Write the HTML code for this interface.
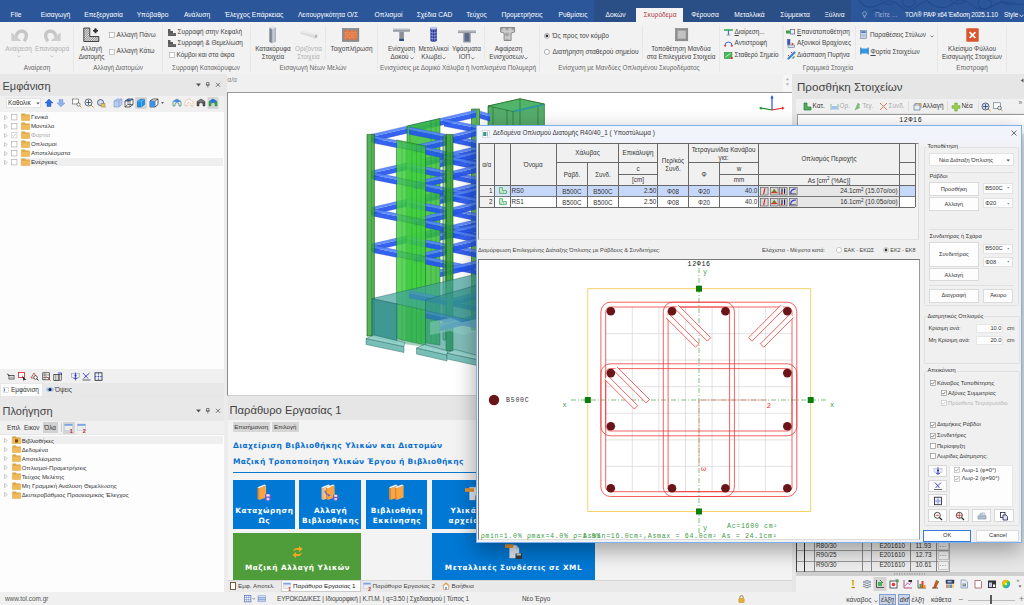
<!DOCTYPE html>
<html lang="el"><head><meta charset="utf-8"><title>RAF</title><style>
*{box-sizing:border-box;margin:0;padding:0}
html,body{width:1024px;height:605px;overflow:hidden;background:#e6e6e6;font-family:"Liberation Sans",sans-serif;}
#root{position:relative;width:1024px;height:605px;overflow:hidden;background:#e6e6e6}
.t{position:absolute;white-space:nowrap;line-height:1;}
.b{position:absolute;}
svg{position:absolute;overflow:visible}
.mono{font-family:"Liberation Mono","DejaVu Sans Mono",monospace}
</style></head><body><div id="root">
<div class="b" style="left:0px;top:0px;width:1024px;height:22px;background:#2b579a;"></div>
<div class="b" style="left:594px;top:0px;width:257px;height:22px;background:#2a4e86;"></div>
<svg style="left:851px;top:0" width="173" height="22" viewBox="0 0 173 22"><g fill="none" stroke="#244a8c" stroke-width="1.100" opacity=".9">
<path d="M8 0c3 6 10 9 17 6s10-7 18-4 8 9 16 8 8-8 16-9"/><path d="M30 0c2 4 8 6 12 3"/><path d="M52 0c-2 5 4 9 9 6s4-7 0-6"/><path d="M76 0c4 6 14 10 22 6s8-8 16-5 10 10 20 8 12-8 20-7 12 4 19 2"/><path d="M100 0c3 5 10 5 14 1"/><path d="M128 0c-3 5 2 11 8 9s6-8 1-9"/><path d="M150 0c2 4 9 6 14 3"/><path d="M20 12c3-3 8-3 11 0"/></g></svg>
<div class="b" style="left:636px;top:8px;width:47px;height:15px;background:#f3f3f3;"></div>
<div class="t" style="left:16px;top:11.5px;font-size:6.7px;color:#fff;transform:translateX(-50%);">File</div>
<div class="t" style="left:55.5px;top:11.5px;font-size:6.7px;color:#fff;transform:translateX(-50%);">Εισαγωγή</div>
<div class="t" style="left:103.5px;top:11.5px;font-size:6.7px;color:#fff;transform:translateX(-50%);">Επεξεργασία</div>
<div class="t" style="left:152.5px;top:11.5px;font-size:6.7px;color:#fff;transform:translateX(-50%);">Υπόβαθρο</div>
<div class="t" style="left:197px;top:11.5px;font-size:6.7px;color:#fff;transform:translateX(-50%);">Ανάλυση</div>
<div class="t" style="left:254px;top:11.5px;font-size:6.7px;color:#fff;transform:translateX(-50%);">Έλεγχος Επάρκειας</div>
<div class="t" style="left:328px;top:11.5px;font-size:6.7px;color:#fff;transform:translateX(-50%);">Λειτουργικότητα Ο/Σ</div>
<div class="t" style="left:388.5px;top:11.5px;font-size:6.7px;color:#fff;transform:translateX(-50%);">Οπλισμοί</div>
<div class="t" style="left:434.5px;top:11.5px;font-size:6.7px;color:#fff;transform:translateX(-50%);">Σχέδια CAD</div>
<div class="t" style="left:476.5px;top:11.5px;font-size:6.7px;color:#fff;transform:translateX(-50%);">Τεύχος</div>
<div class="t" style="left:522px;top:11.5px;font-size:6.7px;color:#fff;transform:translateX(-50%);">Προμετρήσεις</div>
<div class="t" style="left:573px;top:11.5px;font-size:6.7px;color:#fff;transform:translateX(-50%);">Ρυθμίσεις</div>
<div class="t" style="left:615.5px;top:11.5px;font-size:6.7px;color:#fff;transform:translateX(-50%);">Δοκών</div>
<div class="t" style="left:660px;top:11.5px;font-size:6.7px;color:#b33b44;transform:translateX(-50%);">Σκυρόδεμα</div>
<div class="t" style="left:705px;top:11.5px;font-size:6.7px;color:#fff;transform:translateX(-50%);">Φέρουσα</div>
<div class="t" style="left:749.5px;top:11.5px;font-size:6.7px;color:#fff;transform:translateX(-50%);">Μεταλλικά</div>
<div class="t" style="left:795px;top:11.5px;font-size:6.7px;color:#fff;transform:translateX(-50%);">Σύμμεικτα</div>
<div class="t" style="left:834.5px;top:11.5px;font-size:6.7px;color:#fff;transform:translateX(-50%);">Ξύλινα</div>
<svg style="left:862.300px;top:11.200px" width="5.200" height="7.400" viewBox="0 0 7 10"><path d="M3.5 .8a2.6 2.6 0 0 0-1.5 4.7v1.3h3V5.5A2.6 2.6 0 0 0 3.500 .8z" fill="none" stroke="#c9d4e8" stroke-width=".7"/><path d="M2.3 7.8h2.4M2.6 8.8h1.8" stroke="#c9d4e8" stroke-width=".6"/></svg>
<div class="t" style="left:875px;top:11.5px;font-size:6.7px;color:#9fb2d4;">Πείτε ...</div>
<div class="t" style="left:905px;top:11.5px;font-size:6.4px;color:#fff;letter-spacing:-.22px">ΤΟΛ® ΡΑΦ x64 Έκδοση 2025.1.10</div>
<div class="t" style="left:1004px;top:11.5px;font-size:6.4px;color:#fff;">Style</div>
<svg style="left:1019px;top:14px" width="5" height="4" viewBox="0 0 5 4"><path d="M.5 .8l2 2 2-2" fill="none" stroke="#fff" stroke-width=".8"/></svg>
<div class="b" style="left:0px;top:22px;width:1024px;height:52px;background:#f2f2f2;"></div>
<svg style="left:10.500px;top:29px" width="17" height="13" viewBox="0 0 17 13"><path d="M4.800 8.200C5.500 3.200 9 1.800 11.800 2.200s4.200 3 3.300 6.200c-.4 1.500-1 2.500-1.900 3.800" fill="none" stroke="#c6c6c6" stroke-width="3.400"/><path d="M.3 3.200V12h10.200z" fill="#cdcdcd"/></svg>
<svg style="left:43.500px;top:29px" width="17" height="13" viewBox="0 0 17 13"><g transform="translate(17 0) scale(-1 1)"><path d="M4.800 8.200C5.500 3.200 9 1.800 11.800 2.200s4.200 3 3.300 6.200c-.4 1.500-1 2.500-1.900 3.800" fill="none" stroke="#c6c6c6" stroke-width="3.400"/><path d="M.3 3.200V12h10.200z" fill="#cdcdcd"/></g></svg>
<div class="t" style="left:18.5px;top:45.5px;font-size:6.4px;color:#b0b0b0;transform:translateX(-50%);">Αναίρεση</div>
<div class="t" style="left:52px;top:45.5px;font-size:6.4px;color:#b0b0b0;transform:translateX(-50%);">Επαναφορά</div>
<svg style="left:16.5px;top:55.2px" width="4" height="3" viewBox="0 0 4 3"><path d="M.4 .5l1.6 1.6L3.600 .5" fill="none" stroke="#bbb" stroke-width=".7"/></svg>
<svg style="left:50px;top:55.2px" width="4" height="3" viewBox="0 0 4 3"><path d="M.4 .5l1.6 1.6L3.600 .5" fill="none" stroke="#bbb" stroke-width=".7"/></svg>
<div class="t" style="left:37px;top:64.5px;font-size:6.4px;color:#666;transform:translateX(-50%);">Αναίρεση</div>
<div class="b" style="left:72.7px;top:25px;width:1.4px;height:47px;background:#e7e7e7;"></div>
<svg style="left:83px;top:27px" width="17" height="16" viewBox="0 0 17 16"><defs><pattern id="hat" width="1.600" height="1.600" patternUnits="userSpaceOnUse" patternTransform="rotate(45)"><rect width="1.600" height="1.600" fill="#e8e8e8"/><rect width=".8" height="1.600" fill="#8a8a8a"/></pattern></defs><path d="M.8 1h6v8.500h9V14.500H.8z" fill="url(#hat)" stroke="#333" stroke-width=".9"/><path d="M12.500 1.200v5M10 3.700h5" stroke="#333" stroke-width="1.600"/><circle cx="12.500" cy="3.700" r="1.800" fill="#333"/></svg>
<div class="t" style="left:91.5px;top:45.5px;font-size:6.4px;color:#444;transform:translateX(-50%);">Αλλαγή</div>
<div class="t" style="left:91.5px;top:54.3px;font-size:6.4px;color:#444;transform:translateX(-50%);">Διατομής</div>
<svg style="left:108.5px;top:32px" width="5.8" height="5.8" viewBox="0 0 10 10"><rect x=".6" y=".6" width="8.800" height="8.800" fill="#fff" stroke="#a6a6a6" stroke-width="1.100"/></svg>
<div class="t" style="left:116.5px;top:31.5px;font-size:6.4px;color:#444;">Αλλαγή Πάνω</div>
<svg style="left:108.5px;top:48.5px" width="5.8" height="5.8" viewBox="0 0 10 10"><rect x=".6" y=".6" width="8.800" height="8.800" fill="#fff" stroke="#a6a6a6" stroke-width="1.100"/></svg>
<div class="t" style="left:116.5px;top:48px;font-size:6.4px;color:#444;">Αλλαγή Κάτω</div>
<div class="t" style="left:118px;top:64.5px;font-size:6.4px;color:#666;transform:translateX(-50%);">Αλλαγή Διατομών</div>
<div class="b" style="left:161.7px;top:25px;width:1.4px;height:47px;background:#e7e7e7;"></div>
<svg style="left:168px;top:28.5px" width="8" height="7" viewBox="0 0 8 7"><path d="M0 0h2.500v2h2.500v2h3v3H0z" fill="#5a5a5a"/><path d="M0 5h8" stroke="#999" stroke-width=".5"/></svg>
<div class="t" style="left:177.5px;top:28.5px;font-size:6.4px;color:#444;">Συρραφή στην Κεφαλή</div>
<svg style="left:168px;top:40px" width="8" height="7" viewBox="0 0 8 7"><path d="M0 0h2.500v2h2.500v2h3v3H0z" fill="#5a5a5a"/><path d="M0 5h8" stroke="#999" stroke-width=".5"/></svg>
<div class="t" style="left:177.5px;top:40px;font-size:6.4px;color:#444;">Συρραφή &amp; Θεμελίωση</div>
<svg style="left:168.5px;top:52px" width="5.8" height="5.8" viewBox="0 0 10 10"><rect x=".6" y=".6" width="8.800" height="8.800" fill="#fff" stroke="#a6a6a6" stroke-width="1.100"/></svg>
<div class="t" style="left:176.5px;top:51.5px;font-size:6.4px;color:#444;">Κόμβοι και στα άκρα</div>
<div class="t" style="left:206px;top:64.5px;font-size:6.4px;color:#666;transform:translateX(-50%);">Συρραφή Κατακόρυφων</div>
<div class="b" style="left:249.7px;top:25px;width:1.4px;height:47px;background:#e7e7e7;"></div>
<svg style="left:269.300px;top:26px" width="7.400" height="17.500" viewBox="0 0 7.400 17.500"><defs><linearGradient id="colg" x1="0" x2="1"><stop offset="0" stop-color="#6f7884"/><stop offset=".42" stop-color="#8d96a2"/><stop offset=".5" stop-color="#cfd4da"/><stop offset="1" stop-color="#aab0b8"/></linearGradient></defs><path d="M.4 2L3.500 .4 7 1.600V15.800L3.500 17.200 .4 16z" fill="url(#colg)"/><path d="M.4 2L3.500 .4 7 1.600 3.500 3.200z" fill="#dfe3e8"/></svg>
<div class="t" style="left:273px;top:45.5px;font-size:6.4px;color:#444;transform:translateX(-50%);">Κατακόρυφα</div>
<div class="t" style="left:273px;top:54.3px;font-size:6.4px;color:#444;transform:translateX(-50%);">Στοιχεία</div>
<svg style="left:299.800px;top:31.200px" width="17.800" height="7.800" viewBox="0 0 18 8"><path d="M.3 1.300L3 .3l14.500 3v3l-2.300 1.400L.3 2.800z" fill="#dcdcdc"/><path d="M.3 1.300L3 .3l14.500 3-2.300 1z" fill="#ebebeb"/><path d="M15.200 4.300l2.300-1v3l-2.300 1.400z" fill="#b8b8b8"/></svg>
<div class="t" style="left:308.5px;top:45.5px;font-size:6.4px;color:#b0b0b0;transform:translateX(-50%);">Οριζόντια</div>
<div class="t" style="left:308.5px;top:54.3px;font-size:6.4px;color:#b0b0b0;transform:translateX(-50%);">Στοιχεία</div>
<div class="b" style="left:324.7px;top:26px;width:1.4px;height:33px;background:#e7e7e7;"></div>
<svg style="left:342.300px;top:27.700px" width="17.300" height="14" viewBox="0 0 19 15"><rect x=".5" y=".5" width="18" height="14" fill="#8d8d8d" stroke="#6a6a6a" stroke-width=".6"/><rect x="2.500" y="2.500" width="14" height="10" fill="#e0733c"/><path d="M2.500 5h14M2.500 7.500h14M2.500 10h14M6 2.500v2.500M11 2.500v2.500M14.500 2.500v2.500M4 5v2.500M8.500 5v2.500M13 5v2.500M6 7.500V10M11 7.500V10M4 10v2.500M8.500 10v2.500M13 10v2.500" stroke="#f3b089" stroke-width=".45"/></svg>
<div class="t" style="left:351.5px;top:45.5px;font-size:6.4px;color:#444;transform:translateX(-50%);">Τοιχοπλήρωση</div>
<div class="t" style="left:313px;top:64.5px;font-size:6.4px;color:#666;transform:translateX(-50%);">Εισαγωγή Νέων Μελών</div>
<div class="b" style="left:376.7px;top:25px;width:1.4px;height:47px;background:#e7e7e7;"></div>
<svg style="left:393px;top:27.5px" width="17" height="14" viewBox="0 0 17 14"><path d="M0 .8h17v3H0z" fill="#9a9fa6"/><path d="M0 .8h17v1H0z" fill="#c3c7cc"/><rect x="6.300" y="3.800" width="4.600" height="9.200" fill="#8a8f96"/><rect x="6.300" y="10.800" width="4.600" height="2.200" fill="#2f4a8a"/></svg>
<div class="t" style="left:401.5px;top:45.5px;font-size:6.4px;color:#444;transform:translateX(-50%);">Ενίσχυση</div>
<div class="t" style="left:399.5px;top:54.3px;font-size:6.4px;color:#444;transform:translateX(-50%);">Δοκού</div>
<svg style="left:409.7px;top:56.5px" width="4" height="3" viewBox="0 0 4 3"><path d="M.4 .5l1.6 1.6L3.600 .5" fill="none" stroke="#555" stroke-width=".7"/></svg>
<svg style="left:429.500px;top:26px" width="7.200" height="16.800" viewBox="0 0 7.200 16.800"><path d="M.4 2.200C.4 .6 6.800 .6 6.800 2.200V14.600C6.800 16.300 .4 16.300 .4 14.600z" fill="#1f2f9a"/><ellipse cx="3.600" cy="2.200" rx="3.200" ry="1.400" fill="#b9c8f0"/><path d="M2.200 3.400V15.700M4.800 3.500V15.700M.4 6c1.500 1.200 4.900 1.200 6.400 0M.4 9c1.500 1.200 4.900 1.200 6.400 0M.4 12c1.500 1.200 4.900 1.200 6.400 0" stroke="#dfe6ff" stroke-width=".45" fill="none"/></svg>
<div class="t" style="left:433.5px;top:45.5px;font-size:6.4px;color:#444;transform:translateX(-50%);">Μεταλλικοί</div>
<div class="t" style="left:431.5px;top:54.3px;font-size:6.4px;color:#444;transform:translateX(-50%);">Κλωβεί</div>
<svg style="left:442.3px;top:56.5px" width="4" height="3" viewBox="0 0 4 3"><path d="M.4 .5l1.6 1.6L3.600 .5" fill="none" stroke="#555" stroke-width=".7"/></svg>
<svg style="left:457.6px;top:30px" width="18" height="13" viewBox="0 0 18 13"><path d="M0 .5h18v2.600H0z" fill="#9a9fa6"/><path d="M0 .5h18v1H0z" fill="#c3c7cc"/><rect x="5.200" y="3.100" width="7.600" height="9.400" fill="#9a9fa6"/><rect x="6.600" y="3.100" width="4.800" height="8.200" fill="#5a6a8a"/></svg>
<div class="t" style="left:466.5px;top:45.5px;font-size:6.4px;color:#444;transform:translateX(-50%);">Υφάσματα</div>
<div class="t" style="left:464.5px;top:54.3px;font-size:6.4px;color:#444;transform:translateX(-50%);">ΙΟΠ</div>
<svg style="left:470.7px;top:56.5px" width="4" height="3" viewBox="0 0 4 3"><path d="M.4 .5l1.6 1.6L3.600 .5" fill="none" stroke="#555" stroke-width=".7"/></svg>
<div class="b" style="left:483.7px;top:26px;width:1.4px;height:33px;background:#e7e7e7;"></div>
<svg style="left:500.300px;top:27.200px" width="15.200" height="14" viewBox="0 0 15 14"><defs><pattern id="dots" width="1.200" height="1.200" patternUnits="userSpaceOnUse"><rect width="1.200" height="1.200" fill="#cfcfcf"/><rect width=".6" height=".6" fill="#8a8a8a"/></pattern></defs><path d="M.5 .5h14v4.500l-3.500 1v7.500H4v-7.500L.5 5z" fill="url(#dots)" stroke="#777" stroke-width=".8"/></svg>
<div class="t" style="left:508.5px;top:45.5px;font-size:6.4px;color:#444;transform:translateX(-50%);">Αφαίρεση</div>
<div class="t" style="left:506.5px;top:54.3px;font-size:6.4px;color:#444;transform:translateX(-50%);">Ενισχύσεων</div>
<svg style="left:523.7px;top:56.5px" width="4" height="3" viewBox="0 0 4 3"><path d="M.4 .5l1.6 1.6L3.600 .5" fill="none" stroke="#555" stroke-width=".7"/></svg>
<div class="t" style="left:458px;top:64.5px;font-size:6.4px;color:#666;transform:translateX(-50%);">Ενισχύσεις με Δομικό Χάλυβα ή Ινοπλισμένα Πολυμερή</div>
<div class="b" style="left:538.7px;top:25px;width:1.4px;height:47px;background:#e7e7e7;"></div>
<svg style="left:544px;top:32.5px" width="5.8" height="5.8" viewBox="0 0 10 10"><circle cx="5" cy="5" r="4.300" fill="#fff" stroke="#777" stroke-width="1"/><circle cx="5" cy="5" r="2.300" fill="#333"/></svg>
<div class="t" style="left:552.5px;top:32.7px;font-size:6.6px;color:#444;">Ώς προς τον κόμβο</div>
<svg style="left:544px;top:48.5px" width="5.8" height="5.8" viewBox="0 0 10 10"><circle cx="5" cy="5" r="4.300" fill="#fff" stroke="#777" stroke-width="1"/></svg>
<div class="t" style="left:552.5px;top:48.7px;font-size:6.6px;color:#444;">Διατήρηση σταθερού σημείου</div>
<div class="b" style="left:641.7px;top:26px;width:1.4px;height:33px;background:#e7e7e7;"></div>
<svg style="left:674.500px;top:28px" width="13.300" height="13.300" viewBox="0 0 14 14"><rect x=".5" y=".5" width="13" height="13" fill="#8c8c8c" stroke="#777" stroke-width=".5"/><rect x="2.500" y="2.500" width="9" height="9" fill="#c2c2c2" stroke="#9a9a9a" stroke-width=".5"/></svg>
<div class="t" style="left:681px;top:45.5px;font-size:6.4px;color:#444;transform:translateX(-50%);">Τοποθέτηση Μανδύα</div>
<div class="t" style="left:681px;top:54.3px;font-size:6.4px;color:#444;transform:translateX(-50%);">στα Επιλεγμένα Στοιχεία</div>
<div class="t" style="left:629px;top:64.5px;font-size:6.4px;color:#666;transform:translateX(-50%);">Ενίσχυση με Μανδύες Οπλισμένου Σκυροδέματος</div>
<div class="b" style="left:718.7px;top:25px;width:1.4px;height:47px;background:#e7e7e7;"></div>
<svg style="left:724px;top:28.500px" width="9" height="7" viewBox="0 0 9 7"><path d="M0 1h9" stroke="#2aa84a" stroke-width="1.500"/><path d="M4.500 1v5" stroke="#3b7bd8" stroke-width="1.200"/><path d="M2.500 6h4" stroke="#888" stroke-width=".8"/></svg>
<div class="t" style="left:734.5px;top:28.5px;font-size:6.4px;color:#444;"><u>Δ</u>ιαίρεση...</div>
<div class="b" style="left:782.2px;top:26px;width:1.4px;height:33px;background:#e7e7e7;"></div>
<svg style="left:724px;top:40px" width="9" height="7" viewBox="0 0 9 7"><path d="M1 5.500a3.500 3.500 0 0 1 7 0" fill="none" stroke="#3b6bd8" stroke-width="1"/><circle cx="1.200" cy="5.800" r="1" fill="#d33"/><circle cx="7.800" cy="5.800" r="1" fill="#d33"/></svg>
<div class="t" style="left:734.5px;top:40px;font-size:6.4px;color:#444;">Αντιστροφή</div>
<svg style="left:724px;top:51.500px" width="9" height="7" viewBox="0 0 9 7"><rect x=".4" y=".4" width="7.500" height="6" fill="#49b85a" stroke="#2a8a3a" stroke-width=".6"/><path d="M1.500 5l5-3.500" stroke="#fff" stroke-width=".7"/><circle cx="7.800" cy="6" r="1" fill="#d22"/></svg>
<div class="t" style="left:734.5px;top:51.5px;font-size:6.4px;color:#444;">Σταθερό Σημείο</div>
<svg style="left:786px;top:29px" width="9" height="6" viewBox="0 0 9 6"><rect x="0" y="1.500" width="4" height="3" fill="#3aa04a"/><rect x="4.500" y=".5" width="4.200" height="4.500" fill="#e8eef8" stroke="#456" stroke-width=".6"/></svg>
<div class="t" style="left:797px;top:28.5px;font-size:6.4px;color:#444;"><u>Ε</u>πανατοποθέτηση</div>
<svg style="left:787px;top:39px" width="8" height="9" viewBox="0 0 8 9"><rect x=".5" y=".5" width="2.500" height="5" fill="#3b5bd8" stroke="#234" stroke-width=".4"/><rect x="1" y="6" width="6.500" height="2.500" fill="#d8e4f8" stroke="#456" stroke-width=".5"/><circle cx="5.500" cy="5" r="1" fill="#d33"/></svg>
<div class="t" style="left:797px;top:40px;font-size:6.4px;color:#444;">Αξονικοί Βραχίονες</div>
<svg style="left:786.500px;top:50.500px" width="9" height="9" viewBox="0 0 9 9"><path d="M1.500 7.500l6-6" stroke="#3b8bd8" stroke-width="2.400" stroke-linecap="round"/><path d="M1 4l1.500 1.500M4 1l1.500 1.500" stroke="#d33" stroke-width="1"/><path d="M5.500 7.500l2-2" stroke="#3aa04a" stroke-width="1.200"/></svg>
<div class="t" style="left:797px;top:51.5px;font-size:6.4px;color:#444;">Διάσπαση Πυρήνα</div>
<div class="b" style="left:854.7px;top:26px;width:1.4px;height:33px;background:#e7e7e7;"></div>
<svg style="left:860px;top:30px" width="7" height="9" viewBox="0 0 7 9"><rect x=".4" y=".4" width="6.200" height="8.200" fill="#dfe6f3" stroke="#6a7a9a" stroke-width=".6"/><rect x="1.200" y="1.200" width="4.600" height="1.800" fill="#4a78c8"/><path d="M1.200 4.200h4.600M1.200 5.600h4.600M1.200 7h4.600" stroke="#8a9aba" stroke-width=".6"/></svg>
<div class="t" style="left:870px;top:32.2px;font-size:6.4px;color:#444;">Παραθέσεις Στύλων</div>
<svg style="left:929.5px;top:34.8px" width="4" height="3" viewBox="0 0 4 3"><path d="M.4 .5l1.6 1.6L3.600 .5" fill="none" stroke="#555" stroke-width=".7"/></svg>
<svg style="left:859.500px;top:46.500px" width="9" height="8" viewBox="0 0 9 8"><path d="M1 1.500h7v5H1z" fill="#2d9be8"/><path d="M.8 .5v7M8.200 .5v7" stroke="#1a5fa8" stroke-width=".9"/></svg>
<div class="t" style="left:870.5px;top:48.9px;font-size:6.5px;color:#444;"><u>Φ</u>ορτία Στοιχείων</div>
<div class="t" style="left:828px;top:64.5px;font-size:6.4px;color:#666;transform:translateX(-50%);">Γραμμικά Στοιχεία</div>
<div class="b" style="left:936.7px;top:25px;width:1.4px;height:47px;background:#e7e7e7;"></div>
<svg style="left:965.500px;top:27.500px" width="13" height="14" viewBox="0 0 13 14"><rect x=".3" y=".3" width="12.400" height="13.400" rx="1" fill="#d9552c"/><path d="M3.600 4.200l5.800 5.800M9.400 4.200l-5.800 5.800" stroke="#fff" stroke-width="1.700"/></svg>
<div class="t" style="left:972px;top:45.5px;font-size:6.4px;color:#444;transform:translateX(-50%);">Κλείσιμο Φύλλου</div>
<div class="t" style="left:972px;top:54.3px;font-size:6.4px;color:#444;transform:translateX(-50%);">Εισαγωγής Στοιχείων</div>
<div class="t" style="left:972px;top:64.5px;font-size:6.4px;color:#666;transform:translateX(-50%);">Επιστροφή</div>
<div class="b" style="left:1005.7px;top:25px;width:1.4px;height:47px;background:#e7e7e7;"></div>
<div class="b" style="left:0px;top:74px;width:226.5px;height:22px;background:#e7e7e7;"></div>
<div class="t" style="left:2.5px;top:80.8px;font-size:11px;color:#444;">Εμφάνιση</div>
<svg style="left:196px;top:82.3px" width="26" height="6" viewBox="0 0 26 6"><path d="M0 1.500h5L2.500 4.500z" fill="#555"/><path d="M10.500 .5h2.500v2.500h-2.500zM9.800 3h4M11.800 3v2.500" fill="none" stroke="#555" stroke-width=".7"/><path d="M20 .8l4 4M24 .8l-4 4" stroke="#555" stroke-width=".8"/></svg>
<div class="b" style="left:0px;top:96px;width:224px;height:15.5px;background:#f0f0f0;"></div>
<div class="b" style="left:6px;top:97.7px;width:35px;height:10.5px;background:#fff;border:1px solid #e2e2e2;"></div>
<div class="t" style="left:8px;top:99.7px;font-size:6.4px;color:#333;">Καθολικ</div>
<svg style="left:36px;top:102.200px" width="4" height="3" viewBox="0 0 4 3"><path d="M.3 .5h3.400L2 2.500z" fill="#555"/></svg>
<svg style="left:43.5px;top:97.6px" width="10" height="10" viewBox="0 0 10 10"><path d="M5 1L1 5h2v3.500h4V5h2z" fill="#2f6fe0" stroke="#1a4fb0" stroke-width=".4"/></svg>
<svg style="left:55.5px;top:97.6px" width="10" height="10" viewBox="0 0 10 10"><path d="M5 9L1 5h2V1.500h4V5h2z" fill="#8fb0f0" stroke="#6a90d8" stroke-width=".4"/></svg>
<svg style="left:72px;top:97.6px" width="10" height="10" viewBox="0 0 10 10"><rect x=".5" y="1" width="6" height="5" fill="#fff" stroke="#555" stroke-width=".6"/><circle cx="6.500" cy="6.500" r="1.600" fill="#fff" stroke="#333" stroke-width=".6"/><path d="M7.700 7.700L9.500 9.500" stroke="#c80" stroke-width=".9"/></svg>
<svg style="left:84px;top:97.6px" width="10" height="10" viewBox="0 0 10 10"><circle cx="4.500" cy="4.500" r="3.500" fill="#eaf0ff" stroke="#234" stroke-width=".7"/><path d="M4.500 2v5M2 4.500h5" stroke="#234" stroke-width=".7"/><path d="M7 7l2.500 2.500" stroke="#c80" stroke-width="1"/></svg>
<svg style="left:95.5px;top:97.6px" width="10" height="10" viewBox="0 0 10 10"><circle cx="4.500" cy="4.500" r="3" fill="#cfe0ff" stroke="#234" stroke-width=".7"/><path d="M7 7l2.500 2.500" stroke="#c80" stroke-width="1"/><rect x="5" y="5.500" width="4" height="3.500" fill="#e8c060" stroke="#864" stroke-width=".4"/></svg>
<svg style="left:112.5px;top:97.6px" width="10" height="10" viewBox="0 0 10 10"><path d="M1 3l3-2h5v5.500l-3 2.500H1z" fill="#b8ccf0" stroke="#7a95d0" stroke-width=".6"/><path d="M1 3h5v6M6 3l3-2" fill="none" stroke="#7a95d0" stroke-width=".6"/></svg>
<svg style="left:124px;top:97.6px" width="10" height="10" viewBox="0 0 10 10"><path d="M1 3l3-2h5v5.500l-3 2.500H1z" fill="#fff" stroke="#222" stroke-width=".7"/><path d="M1 3l3-2h5l-3 2z" fill="#3f7fe8"/><path d="M1 3h5v6M6 3l3-2M4 1v5.500H9M4 6.500L1 9" fill="none" stroke="#222" stroke-width=".6"/></svg>
<svg style="left:136px;top:97.6px" width="10" height="10" viewBox="0 0 10 10"><rect x="-.8" y="-.8" width="11.600" height="11.600" fill="#d4d4d4"/><path d="M1.500 3l3-1.800h4v5.300l-3 2.500h-4z" fill="#1f8fe8" stroke="#0a5fb8" stroke-width=".5"/><path d="M1.500 3h4v6M5.500 3l3-1.800" fill="none" stroke="#7fd0ff" stroke-width=".6"/></svg>
<svg style="left:148.5px;top:97.6px" width="10" height="10" viewBox="0 0 10 10"><path d="M1 3l3-2h5v5.500l-3 2.500H1z" fill="#fff" stroke="#222" stroke-width=".7"/><path d="M1 3h5v6M6 3l3-2" fill="none" stroke="#222" stroke-width=".6"/><path d="M1 3h5v6H1z" fill="#3f8fe8"/></svg>
<svg style="left:171.5px;top:97.6px" width="10" height="10" viewBox="0 0 10 10"><path d="M5 1l4 2.500v4.500H7V5.500L5 4.500 3 5.500V8H1V3.500z" fill="#e8eef8" stroke="#2a7a4a" stroke-width=".6"/><path d="M5 1l4 2.500-4 1-4-1z" fill="#4a8ae8"/></svg>
<svg style="left:183.5px;top:97.6px" width="10" height="10" viewBox="0 0 10 10"><path d="M5 1l4 2.500v4.500H7V5.500L5 4.500 3 5.500V8H1V3.500z" fill="#fff" stroke="#e08050" stroke-width=".6" stroke-dasharray="1 .6"/></svg>
<svg style="left:195.5px;top:97.6px" width="10" height="10" viewBox="0 0 10 10"><path d="M5 1l4 2.500v4.500H7V5.500L5 4.500 3 5.500V8H1V3.500z" fill="#555" stroke="#333" stroke-width=".5"/><path d="M5 1l4 2.500-4 1-4-1z" fill="#777"/></svg>
<svg style="left:207.5px;top:97.6px" width="10" height="10" viewBox="0 0 10 10"><rect x="-.5" y="-.8" width="11" height="11.600" fill="#d4d4d4"/><path d="M5 1l4 2.500v4.500H7V5.500L5 4.500 3 5.500V8H1V3.500z" fill="#2fb04a" stroke="#1a7a30" stroke-width=".4"/><path d="M5 .8l4 2.700-4 1.500-4-1.500z" fill="#2f6fe0"/></svg>
<svg style="left:161px;top:101.700px" width="3" height="2" viewBox="0 0 3 2"><path d="M0 0h3L1.500 2z" fill="#666"/></svg>
<div class="b" style="left:0px;top:111.5px;width:223.5px;height:257.5px;background:#fdfdfd;"></div>
<svg style="left:4px;top:114.6px" width="4" height="5" viewBox="0 0 4 5"><path d="M.5 .5l2.800 2-2.800 2z" fill="none" stroke="#aaa" stroke-width=".6"/></svg>
<svg style="left:11px;top:113.6px" width="6.3" height="6.3" viewBox="0 0 10 10"><rect x=".6" y=".6" width="8.800" height="8.800" fill="#fff" stroke="#b0b0b0" stroke-width="1.100"/></svg>
<svg style="left:20.8px;top:113.0px" width="9" height="8" viewBox="0 0 9 8"><path d="M.3 .6h3.500l.8 1h4.100v6H.3z" fill="#d9a441"/><path d="M.3 2.600h8.400v5H.3z" fill="#f0b95a"/></svg>
<div class="t" style="left:31px;top:114.0px;font-size:6.15px;color:#333;">Γενικά</div>
<svg style="left:4px;top:123.64999999999999px" width="4" height="5" viewBox="0 0 4 5"><path d="M.5 .5l2.800 2-2.800 2z" fill="none" stroke="#aaa" stroke-width=".6"/></svg>
<svg style="left:11px;top:122.64999999999999px" width="6.3" height="6.3" viewBox="0 0 10 10"><rect x=".6" y=".6" width="8.800" height="8.800" fill="#fff" stroke="#b0b0b0" stroke-width="1.100"/></svg>
<svg style="left:20.8px;top:122.05px" width="9" height="8" viewBox="0 0 9 8"><path d="M.3 .6h3.500l.8 1h4.100v6H.3z" fill="#d9a441"/><path d="M.3 2.600h8.400v5H.3z" fill="#f0b95a"/></svg>
<div class="t" style="left:31px;top:123.05px;font-size:6.15px;color:#333;">Μοντέλο</div>
<svg style="left:4px;top:132.70000000000002px" width="4" height="5" viewBox="0 0 4 5"><path d="M.5 .5l2.800 2-2.800 2z" fill="none" stroke="#aaa" stroke-width=".6"/></svg>
<svg style="left:11px;top:131.70000000000002px" width="6.3" height="6.3" viewBox="0 0 10 10"><rect x=".6" y=".6" width="8.800" height="8.800" fill="#fff" stroke="#ccc" stroke-width="1.100"/><path d="M2.200 5.200l2 2.100L7.900 2.800" fill="none" stroke="#bbb" stroke-width="1.100"/></svg>
<svg style="left:20.8px;top:131.1px" width="9" height="8" viewBox="0 0 9 8"><path d="M.3 .6h3.500l.8 1h4.100v6H.3z" fill="#d9a441"/><path d="M.3 2.600h8.400v5H.3z" fill="#f0b95a"/></svg>
<div class="t" style="left:31px;top:132.1px;font-size:6.15px;color:#aaa;">Φορτία</div>
<svg style="left:4px;top:141.75px" width="4" height="5" viewBox="0 0 4 5"><path d="M.5 .5l2.800 2-2.800 2z" fill="none" stroke="#aaa" stroke-width=".6"/></svg>
<svg style="left:11px;top:140.75px" width="6.3" height="6.3" viewBox="0 0 10 10"><rect x=".6" y=".6" width="8.800" height="8.800" fill="#fff" stroke="#b0b0b0" stroke-width="1.100"/></svg>
<svg style="left:20.8px;top:140.14999999999998px" width="9" height="8" viewBox="0 0 9 8"><path d="M.3 .6h3.500l.8 1h4.100v6H.3z" fill="#d9a441"/><path d="M.3 2.600h8.400v5H.3z" fill="#f0b95a"/></svg>
<div class="t" style="left:31px;top:141.14999999999998px;font-size:6.15px;color:#333;">Οπλισμοί</div>
<svg style="left:4px;top:150.8px" width="4" height="5" viewBox="0 0 4 5"><path d="M.5 .5l2.800 2-2.800 2z" fill="none" stroke="#aaa" stroke-width=".6"/></svg>
<svg style="left:11px;top:149.8px" width="6.3" height="6.3" viewBox="0 0 10 10"><rect x=".6" y=".6" width="8.800" height="8.800" fill="#fff" stroke="#b0b0b0" stroke-width="1.100"/></svg>
<svg style="left:20.8px;top:149.2px" width="9" height="8" viewBox="0 0 9 8"><path d="M.3 .6h3.500l.8 1h4.100v6H.3z" fill="#d9a441"/><path d="M.3 2.600h8.400v5H.3z" fill="#f0b95a"/></svg>
<div class="t" style="left:31px;top:150.2px;font-size:6.15px;color:#333;">Αποτελέσματα</div>
<div class="b" style="left:19.5px;top:157.75px;width:203px;height:8.6px;background:#efefef;"></div>
<svg style="left:4px;top:159.85000000000002px" width="4" height="5" viewBox="0 0 4 5"><path d="M.5 .5l2.800 2-2.800 2z" fill="none" stroke="#aaa" stroke-width=".6"/></svg>
<svg style="left:11px;top:158.85000000000002px" width="6.3" height="6.3" viewBox="0 0 10 10"><rect x=".6" y=".6" width="8.800" height="8.800" fill="#fff" stroke="#b0b0b0" stroke-width="1.100"/></svg>
<svg style="left:20.8px;top:158.25px" width="9" height="8" viewBox="0 0 9 8"><path d="M.3 .6h3.500l.8 1h4.100v6H.3z" fill="#d9a441"/><path d="M.3 2.600h8.400v5H.3z" fill="#f0b95a"/></svg>
<div class="t" style="left:31px;top:159.25px;font-size:6.15px;color:#333;">Ενέργειες</div>
<div class="b" style="left:0px;top:369px;width:224px;height:14px;background:#f0f0f0;"></div>
<svg style="left:6px;top:372px" width="9" height="9" viewBox="0 0 9 9"><path d="M.5 1l3.500 2.500L2.500 4z" fill="#222"/><rect x="3" y="3.500" width="5" height="3.500" fill="#fff" stroke="#222" stroke-width=".7"/><path d="M4 5.200h3" stroke="#222" stroke-width=".5"/></svg>
<svg style="left:18px;top:372px" width="9" height="9" viewBox="0 0 9 9"><rect x=".5" y=".5" width="6" height="5" fill="#fff" stroke="#c22" stroke-width=".8"/><path d="M4 3.500l4.500 4.500-2-.3-.8 1.300z" fill="#222"/></svg>
<svg style="left:29.5px;top:372px" width="9" height="9" viewBox="0 0 9 9"><path d="M1 6L4 1l3 5z" fill="none" stroke="#c22" stroke-width=".7"/><circle cx="5.500" cy="5.500" r="1.800" fill="#fff" stroke="#222" stroke-width=".7"/><path d="M6.800 6.800L8.500 8.500" stroke="#222" stroke-width=".9"/></svg>
<svg style="left:41.5px;top:372px" width="9" height="9" viewBox="0 0 9 9"><rect x=".8" y=".8" width="6.500" height="7" fill="#fff" stroke="#222" stroke-width=".7"/><path d="M.8 3h6.500M.8 5.500h6.500M3 .8v7" stroke="#222" stroke-width=".5"/><path d="M4.500 4.500l4 4" stroke="#c22" stroke-width=".8"/></svg>
<svg style="left:53px;top:372px" width="9" height="9" viewBox="0 0 9 9"><rect x=".8" y="2.500" width="5" height="6" fill="#fff" stroke="#222" stroke-width=".7"/><path d="M2.500 2.500v6M4 2.500v6" stroke="#222" stroke-width=".4"/><path d="M5 1h3.500v2" fill="none" stroke="#22c" stroke-width=".8"/><rect x="6.200" y="2.500" width="2.300" height="6" fill="#ddd" stroke="#222" stroke-width=".5"/></svg>
<svg style="left:70.5px;top:372px" width="9" height="9" viewBox="0 0 9 9"><rect x=".5" y="1.500" width="8" height="4" fill="#e8eef8" stroke="#888" stroke-width=".5"/><path d="M4.500 .5v8M2.500 6.500h4" stroke="#22c" stroke-width=".7"/><circle cx="4.500" cy="3.500" r="1" fill="#22c"/></svg>
<svg style="left:82px;top:372px" width="9" height="9" viewBox="0 0 9 9"><path d="M.5 8h8" stroke="#222" stroke-width=".7"/><path d="M1 1l5 5.500M1.500 6.500L7.500 1" stroke="#22c" stroke-width=".8"/></svg>
<svg style="left:93.5px;top:372px" width="9" height="9" viewBox="0 0 9 9"><rect x="1" y=".8" width="7" height="7.500" fill="#e8eef8" stroke="#222" stroke-width=".8"/><path d="M4.500 .8v7.500M1 4.500h7" stroke="#22c" stroke-width=".7" stroke-dasharray="1 .6"/></svg>
<div class="b" style="left:0px;top:383px;width:224px;height:13px;background:#e8e8e8;"></div>
<div class="b" style="left:1px;top:383.8px;width:41px;height:12px;background:#fcfcfc;"></div>
<svg style="left:3px;top:386.5px" width="6" height="6" viewBox="0 0 6 6"><rect x=".3" y=".3" width="5.400" height="5.400" fill="#fff" stroke="#bbb" stroke-width=".5"/><path d="M1.500 1.500v3" stroke="#46c" stroke-width=".8"/></svg>
<div class="t" style="left:11px;top:387.2px;font-size:6.4px;color:#333;">Εμφάνιση</div>
<svg style="left:45.500px;top:387px" width="8" height="5" viewBox="0 0 8 5"><ellipse cx="4" cy="2.500" rx="3.800" ry="2.300" fill="#9fc0e8"/><circle cx="4" cy="2.500" r="1.500" fill="#124"/></svg>
<div class="t" style="left:55px;top:387.2px;font-size:6.4px;color:#333;">Όψεις</div>
<div class="b" style="left:0px;top:397px;width:226.5px;height:24px;background:#e8e8e8;"></div>
<div class="t" style="left:2.5px;top:406.2px;font-size:11px;color:#444;">Πλοήγηση</div>
<svg style="left:196px;top:407.5px" width="26" height="6" viewBox="0 0 26 6"><path d="M0 1.500h5L2.500 4.500z" fill="#555"/><path d="M10.500 .5h2.500v2.500h-2.500zM9.800 3h4M11.800 3v2.500" fill="none" stroke="#555" stroke-width=".7"/><path d="M20 .8l4 4M24 .8l-4 4" stroke="#555" stroke-width=".8"/></svg>
<div class="b" style="left:0px;top:421px;width:224px;height:13px;background:#f0f0f0;"></div>
<div class="t" style="left:7px;top:424.8px;font-size:6.4px;color:#333;">Επιλ</div>
<div class="t" style="left:24px;top:424.8px;font-size:6.4px;color:#333;">Εικον</div>
<div class="b" style="left:42.5px;top:421.8px;width:15.5px;height:11px;background:#d2d2d2;"></div>
<div class="t" style="left:44.3px;top:424.8px;font-size:6.4px;color:#333;">Όλα</div>
<div class="b" style="left:60.5px;top:422.5px;width:0.6px;height:9.5px;background:#ccc;"></div>
<svg style="left:64px;top:423px" width="10" height="10" viewBox="0 0 10 10"><rect x="-1" y="-1" width="12" height="12" fill="#d4d4d4"/><rect x=".5" y="1" width="8" height="6.500" fill="#ececec" stroke="#b8c4dc" stroke-width=".5"/><rect x=".5" y="1" width="8" height="1.800" fill="#7aa4e6"/><text x="5.800" y="9.700" font-size="5.500" font-weight="bold" fill="#b8242c" font-family="Liberation Sans,sans-serif">1</text></svg>
<svg style="left:76.5px;top:423px" width="10" height="10" viewBox="0 0 10 10"><rect x=".5" y="1" width="8" height="6.500" fill="#ececec" stroke="#b8c4dc" stroke-width=".5"/><rect x=".5" y="1" width="8" height="1.800" fill="#7aa4e6"/><text x="5.800" y="9.700" font-size="5.500" font-weight="bold" fill="#b8242c" font-family="Liberation Sans,sans-serif">2</text></svg>
<div class="b" style="left:0px;top:434.5px;width:223.5px;height:157.5px;background:#fdfdfd;"></div>
<div class="b" style="left:10.5px;top:435.5px;width:212px;height:8.6px;background:#efefef;"></div>
<svg style="left:4px;top:437.6px" width="4" height="5" viewBox="0 0 4 5"><path d="M.5 .5l2.800 2-2.800 2z" fill="none" stroke="#aaa" stroke-width=".6"/></svg>
<svg style="left:11.8px;top:436.0px" width="9" height="8" viewBox="0 0 9 8"><path d="M.3 .6h3.500l.8 1h4.100v6H.3z" fill="#d9a441"/><path d="M.3 2.600h8.400v5H.3z" fill="#f0b95a"/><rect x="3" y="3.400" width="3" height="3" fill="#6a4a10"/></svg>
<div class="t" style="left:21.8px;top:437.6px;font-size:6.08px;color:#333;">Βιβλιοθήκες</div>
<svg style="left:4px;top:446.70000000000005px" width="4" height="5" viewBox="0 0 4 5"><path d="M.5 .5l2.800 2-2.800 2z" fill="none" stroke="#aaa" stroke-width=".6"/></svg>
<svg style="left:11.8px;top:445.1px" width="9" height="8" viewBox="0 0 9 8"><path d="M.3 .6h3.500l.8 1h4.100v6H.3z" fill="#d9a441"/><path d="M.3 2.600h8.400v5H.3z" fill="#f0b95a"/></svg>
<div class="t" style="left:21.8px;top:446.70000000000005px;font-size:6.08px;color:#333;">Δεδομένα</div>
<svg style="left:4px;top:455.8px" width="4" height="5" viewBox="0 0 4 5"><path d="M.5 .5l2.800 2-2.800 2z" fill="none" stroke="#aaa" stroke-width=".6"/></svg>
<svg style="left:11.8px;top:454.2px" width="9" height="8" viewBox="0 0 9 8"><path d="M.3 .6h3.500l.8 1h4.100v6H.3z" fill="#d9a441"/><path d="M.3 2.600h8.400v5H.3z" fill="#f0b95a"/></svg>
<div class="t" style="left:21.8px;top:455.8px;font-size:6.08px;color:#333;">Αποτελέσματα</div>
<svg style="left:4px;top:464.90000000000003px" width="4" height="5" viewBox="0 0 4 5"><path d="M.5 .5l2.800 2-2.800 2z" fill="none" stroke="#aaa" stroke-width=".6"/></svg>
<svg style="left:11.8px;top:463.3px" width="9" height="8" viewBox="0 0 9 8"><path d="M.3 .6h3.500l.8 1h4.100v6H.3z" fill="#d9a441"/><path d="M.3 2.600h8.400v5H.3z" fill="#f0b95a"/></svg>
<div class="t" style="left:21.8px;top:464.90000000000003px;font-size:6.08px;color:#333;">Οπλισμοί-Προμετρήσεις</div>
<svg style="left:4px;top:474.0px" width="4" height="5" viewBox="0 0 4 5"><path d="M.5 .5l2.800 2-2.800 2z" fill="none" stroke="#aaa" stroke-width=".6"/></svg>
<svg style="left:11.8px;top:472.4px" width="9" height="8" viewBox="0 0 9 8"><path d="M.3 .6h3.500l.8 1h4.100v6H.3z" fill="#d9a441"/><path d="M.3 2.600h8.400v5H.3z" fill="#f0b95a"/></svg>
<div class="t" style="left:21.8px;top:474.0px;font-size:6.08px;color:#333;">Τεύχος Μελέτης</div>
<svg style="left:4px;top:483.1px" width="4" height="5" viewBox="0 0 4 5"><path d="M.5 .5l2.800 2-2.800 2z" fill="none" stroke="#aaa" stroke-width=".6"/></svg>
<svg style="left:11.8px;top:481.5px" width="9" height="8" viewBox="0 0 9 8"><path d="M.3 .6h3.500l.8 1h4.100v6H.3z" fill="#d9a441"/><path d="M.3 2.600h8.400v5H.3z" fill="#f0b95a"/></svg>
<div class="t" style="left:21.8px;top:483.1px;font-size:6.08px;color:#333;">Μη Γραμμική Ανάλυση Θεμελίωσης</div>
<svg style="left:4px;top:492.2px" width="4" height="5" viewBox="0 0 4 5"><path d="M.5 .5l2.800 2-2.800 2z" fill="none" stroke="#aaa" stroke-width=".6"/></svg>
<svg style="left:11.8px;top:490.59999999999997px" width="9" height="8" viewBox="0 0 9 8"><path d="M.3 .6h3.500l.8 1h4.100v6H.3z" fill="#d9a441"/><path d="M.3 2.600h8.400v5H.3z" fill="#f0b95a"/></svg>
<div class="t" style="left:21.8px;top:492.2px;font-size:6.08px;color:#333;">Δευτεροβάθμιος Προσεισμικός Έλεγχος</div>
<div class="b" style="left:223.5px;top:96px;width:4px;height:496px;background:#ececec;"></div>
<div class="b" style="left:226.5px;top:74px;width:565.5px;height:18px;background:#f0f0f0;"></div>
<div class="t" style="left:227.3px;top:77px;font-size:6.8px;color:#888;">α/α</div>
<div class="b" style="left:783px;top:75px;width:9px;height:17px;background:#f6f6f6;"></div>
<svg style="left:785px;top:77px" width="5" height="10" viewBox="0 0 5 10"><path d="M.5 3.300h4L2.500 .8zM.5 6.200h4L2.500 8.700z" fill="#bdbdbd"/></svg>
<div class="b" style="left:227.3px;top:92px;width:564.5px;height:304px;background:#fff;border-left:1.300px solid #8a8a8a;border-top:1.300px solid #9a9a9a;border-bottom:1px solid #d0d0d0;"></div>
<svg style="left:0;top:0" width="1024" height="605" viewBox="0 0 1024 605"><polygon points="488.0,106.0 520.0,98.8 544.4,104.0 544.4,130.0 488.0,130.0" fill="#2f9a4a" fill-opacity="0.82" stroke="#145a14" stroke-width="0.6" stroke-linejoin="round"/><polygon points="488.0,106.0 520.0,98.8 544.4,104.0 513.0,111.5" fill="#4fb86a" fill-opacity="0.75" stroke="#145a14" stroke-width="0.5" stroke-linejoin="round"/><path d="M493 107.500V130M507 110V130M513 111.500V130M520 98.800V125M538 106V130" stroke="#145a14" stroke-width=".5"/><polygon points="513.5,110.5 543.5,103.8 543.5,105.8 513.5,112.5" fill="#2a9aa8" fill-opacity="0.9"/><polygon points="479.5,113.6 490.0,116.6 490.0,121.3 479.5,118.3" fill="#2455ee" fill-opacity="0.92"/><polygon points="479.5,111.0 490.0,114.0 490.0,116.6 479.5,113.6" fill="#5584f8" fill-opacity="0.92"/><path d="M479.5 111.0L490.0 114.0M479.5 118.3L490.0 121.3" stroke="#1a3ab0" stroke-width=".35" opacity=".7"/><polygon points="471.5,109.0 479.5,109.0 479.5,330.0 471.5,330.0" fill="#3aa63a" fill-opacity="0.8" stroke="#145a14" stroke-width="0.6" stroke-linejoin="round"/><path d="M476.3 110V330" stroke="#145a14" stroke-width=".4" opacity=".6"/><polygon points="371.0,137.0 476.0,112.6 476.0,117.3 371.0,141.7" fill="#2455ee" fill-opacity="0.92"/><polygon points="371.0,134.4 476.0,110.0 476.0,112.6 371.0,137.0" fill="#5584f8" fill-opacity="0.92"/><path d="M371.0 134.4L476.0 110.0M371.0 141.7L476.0 117.3" stroke="#1a3ab0" stroke-width=".35" opacity=".7"/><polygon points="371.0,173.6 476.0,149.2 476.0,153.9 371.0,178.3" fill="#2455ee" fill-opacity="0.92"/><polygon points="371.0,171.0 476.0,146.6 476.0,149.2 371.0,173.6" fill="#5584f8" fill-opacity="0.92"/><path d="M371.0 171.0L476.0 146.6M371.0 178.3L476.0 153.9" stroke="#1a3ab0" stroke-width=".35" opacity=".7"/><polygon points="371.0,210.1 476.0,185.7 476.0,190.4 371.0,214.8" fill="#2455ee" fill-opacity="0.92"/><polygon points="371.0,207.5 476.0,183.1 476.0,185.7 371.0,210.1" fill="#5584f8" fill-opacity="0.92"/><path d="M371.0 207.5L476.0 183.1M371.0 214.8L476.0 190.4" stroke="#1a3ab0" stroke-width=".35" opacity=".7"/><polygon points="371.0,246.6 476.0,222.2 476.0,226.9 371.0,251.3" fill="#2455ee" fill-opacity="0.92"/><polygon points="371.0,244.0 476.0,219.6 476.0,222.2 371.0,246.6" fill="#5584f8" fill-opacity="0.92"/><path d="M371.0 244.0L476.0 219.6M371.0 251.3L476.0 226.9" stroke="#1a3ab0" stroke-width=".35" opacity=".7"/><polygon points="407.0,126.0 440.0,118.5 440.0,345.0 407.0,340.0" fill="#35c035" fill-opacity="0.85" stroke="#145a14" stroke-width="0.5" stroke-linejoin="round"/><path d="M410 126V340M436 120V344M431 121V343" stroke="#145a14" stroke-width=".4" opacity=".6"/><polygon points="409.0,129.6 447.0,137.0 447.0,141.7 409.0,134.3" fill="#2455ee" fill-opacity="0.92"/><polygon points="409.0,127.0 447.0,134.4 447.0,137.0 409.0,129.6" fill="#5584f8" fill-opacity="0.92"/><path d="M409.0 127.0L447.0 134.4M409.0 134.3L447.0 141.7" stroke="#1a3ab0" stroke-width=".35" opacity=".7"/><polygon points="444.0,121.6 477.0,128.1 477.0,132.8 444.0,126.3" fill="#2455ee" fill-opacity="0.92"/><polygon points="444.0,119.0 477.0,125.5 477.0,128.1 444.0,121.6" fill="#5584f8" fill-opacity="0.92"/><path d="M444.0 119.0L477.0 125.5M444.0 126.3L477.0 132.8" stroke="#1a3ab0" stroke-width=".35" opacity=".7"/><polygon points="453.0,138.1 477.0,143.1 477.0,147.8 453.0,142.8" fill="#2455ee" fill-opacity="0.92"/><polygon points="453.0,135.5 477.0,140.5 477.0,143.1 453.0,138.1" fill="#5584f8" fill-opacity="0.92"/><path d="M453.0 135.5L477.0 140.5M453.0 142.8L477.0 147.8" stroke="#1a3ab0" stroke-width=".35" opacity=".7"/><polygon points="453.0,137.0 477.0,131.1 477.0,135.8 453.0,141.7" fill="#2455ee" fill-opacity="0.92"/><polygon points="453.0,134.4 477.0,128.5 477.0,131.1 453.0,137.0" fill="#5584f8" fill-opacity="0.92"/><path d="M453.0 134.4L477.0 128.5M453.0 141.7L477.0 135.8" stroke="#1a3ab0" stroke-width=".35" opacity=".7"/><polygon points="414.0,148.1 447.0,140.6 447.0,145.3 414.0,152.8" fill="#2455ee" fill-opacity="0.92"/><polygon points="414.0,145.5 447.0,138.0 447.0,140.6 414.0,148.1" fill="#5584f8" fill-opacity="0.92"/><path d="M414.0 145.5L447.0 138.0M414.0 152.8L447.0 145.3" stroke="#1a3ab0" stroke-width=".35" opacity=".7"/><polygon points="425.0,149.6 477.0,160.1 477.0,164.8 425.0,154.3" fill="#2455ee" fill-opacity="0.92"/><polygon points="425.0,147.0 477.0,157.5 477.0,160.1 425.0,149.6" fill="#5584f8" fill-opacity="0.92"/><path d="M425.0 147.0L477.0 157.5M425.0 154.3L477.0 164.8" stroke="#1a3ab0" stroke-width=".35" opacity=".7"/><polygon points="440.0,162.6 477.0,153.6 477.0,158.3 440.0,167.3" fill="#2455ee" fill-opacity="0.92"/><polygon points="440.0,160.0 477.0,151.0 477.0,153.6 440.0,162.6" fill="#5584f8" fill-opacity="0.92"/><path d="M440.0 160.0L477.0 151.0M440.0 167.3L477.0 158.3" stroke="#1a3ab0" stroke-width=".35" opacity=".7"/><polygon points="409.0,166.2 447.0,173.6 447.0,178.3 409.0,170.9" fill="#2455ee" fill-opacity="0.92"/><polygon points="409.0,163.6 447.0,171.0 447.0,173.6 409.0,166.2" fill="#5584f8" fill-opacity="0.92"/><path d="M409.0 163.6L447.0 171.0M409.0 170.9L447.0 178.3" stroke="#1a3ab0" stroke-width=".35" opacity=".7"/><polygon points="444.0,158.2 477.0,164.7 477.0,169.4 444.0,162.9" fill="#2455ee" fill-opacity="0.92"/><polygon points="444.0,155.6 477.0,162.1 477.0,164.7 444.0,158.2" fill="#5584f8" fill-opacity="0.92"/><path d="M444.0 155.6L477.0 162.1M444.0 162.9L477.0 169.4" stroke="#1a3ab0" stroke-width=".35" opacity=".7"/><polygon points="453.0,174.7 477.0,179.7 477.0,184.4 453.0,179.4" fill="#2455ee" fill-opacity="0.92"/><polygon points="453.0,172.1 477.0,177.1 477.0,179.7 453.0,174.7" fill="#5584f8" fill-opacity="0.92"/><path d="M453.0 172.1L477.0 177.1M453.0 179.4L477.0 184.4" stroke="#1a3ab0" stroke-width=".35" opacity=".7"/><polygon points="453.0,173.6 477.0,167.7 477.0,172.4 453.0,178.3" fill="#2455ee" fill-opacity="0.92"/><polygon points="453.0,171.0 477.0,165.1 477.0,167.7 453.0,173.6" fill="#5584f8" fill-opacity="0.92"/><path d="M453.0 171.0L477.0 165.1M453.0 178.3L477.0 172.4" stroke="#1a3ab0" stroke-width=".35" opacity=".7"/><polygon points="414.0,184.7 447.0,177.2 447.0,181.9 414.0,189.4" fill="#2455ee" fill-opacity="0.92"/><polygon points="414.0,182.1 447.0,174.6 447.0,177.2 414.0,184.7" fill="#5584f8" fill-opacity="0.92"/><path d="M414.0 182.1L447.0 174.6M414.0 189.4L447.0 181.9" stroke="#1a3ab0" stroke-width=".35" opacity=".7"/><polygon points="425.0,186.2 477.0,196.7 477.0,201.4 425.0,190.9" fill="#2455ee" fill-opacity="0.92"/><polygon points="425.0,183.6 477.0,194.1 477.0,196.7 425.0,186.2" fill="#5584f8" fill-opacity="0.92"/><path d="M425.0 183.6L477.0 194.1M425.0 190.9L477.0 201.4" stroke="#1a3ab0" stroke-width=".35" opacity=".7"/><polygon points="440.0,199.2 477.0,190.2 477.0,194.9 440.0,203.9" fill="#2455ee" fill-opacity="0.92"/><polygon points="440.0,196.6 477.0,187.6 477.0,190.2 440.0,199.2" fill="#5584f8" fill-opacity="0.92"/><path d="M440.0 196.6L477.0 187.6M440.0 203.9L477.0 194.9" stroke="#1a3ab0" stroke-width=".35" opacity=".7"/><polygon points="409.0,202.7 447.0,210.1 447.0,214.8 409.0,207.4" fill="#2455ee" fill-opacity="0.92"/><polygon points="409.0,200.1 447.0,207.5 447.0,210.1 409.0,202.7" fill="#5584f8" fill-opacity="0.92"/><path d="M409.0 200.1L447.0 207.5M409.0 207.4L447.0 214.8" stroke="#1a3ab0" stroke-width=".35" opacity=".7"/><polygon points="444.0,194.7 477.0,201.2 477.0,205.9 444.0,199.4" fill="#2455ee" fill-opacity="0.92"/><polygon points="444.0,192.1 477.0,198.6 477.0,201.2 444.0,194.7" fill="#5584f8" fill-opacity="0.92"/><path d="M444.0 192.1L477.0 198.6M444.0 199.4L477.0 205.9" stroke="#1a3ab0" stroke-width=".35" opacity=".7"/><polygon points="453.0,211.2 477.0,216.2 477.0,220.9 453.0,215.9" fill="#2455ee" fill-opacity="0.92"/><polygon points="453.0,208.6 477.0,213.6 477.0,216.2 453.0,211.2" fill="#5584f8" fill-opacity="0.92"/><path d="M453.0 208.6L477.0 213.6M453.0 215.9L477.0 220.9" stroke="#1a3ab0" stroke-width=".35" opacity=".7"/><polygon points="453.0,210.1 477.0,204.2 477.0,208.9 453.0,214.8" fill="#2455ee" fill-opacity="0.92"/><polygon points="453.0,207.5 477.0,201.6 477.0,204.2 453.0,210.1" fill="#5584f8" fill-opacity="0.92"/><path d="M453.0 207.5L477.0 201.6M453.0 214.8L477.0 208.9" stroke="#1a3ab0" stroke-width=".35" opacity=".7"/><polygon points="414.0,221.2 447.0,213.7 447.0,218.4 414.0,225.9" fill="#2455ee" fill-opacity="0.92"/><polygon points="414.0,218.6 447.0,211.1 447.0,213.7 414.0,221.2" fill="#5584f8" fill-opacity="0.92"/><path d="M414.0 218.6L447.0 211.1M414.0 225.9L447.0 218.4" stroke="#1a3ab0" stroke-width=".35" opacity=".7"/><polygon points="425.0,222.7 477.0,233.2 477.0,237.9 425.0,227.4" fill="#2455ee" fill-opacity="0.92"/><polygon points="425.0,220.1 477.0,230.6 477.0,233.2 425.0,222.7" fill="#5584f8" fill-opacity="0.92"/><path d="M425.0 220.1L477.0 230.6M425.0 227.4L477.0 237.9" stroke="#1a3ab0" stroke-width=".35" opacity=".7"/><polygon points="440.0,235.7 477.0,226.7 477.0,231.4 440.0,240.4" fill="#2455ee" fill-opacity="0.92"/><polygon points="440.0,233.1 477.0,224.1 477.0,226.7 440.0,235.7" fill="#5584f8" fill-opacity="0.92"/><path d="M440.0 233.1L477.0 224.1M440.0 240.4L477.0 231.4" stroke="#1a3ab0" stroke-width=".35" opacity=".7"/><polygon points="409.0,239.2 447.0,246.6 447.0,251.3 409.0,243.9" fill="#2455ee" fill-opacity="0.92"/><polygon points="409.0,236.6 447.0,244.0 447.0,246.6 409.0,239.2" fill="#5584f8" fill-opacity="0.92"/><path d="M409.0 236.6L447.0 244.0M409.0 243.9L447.0 251.3" stroke="#1a3ab0" stroke-width=".35" opacity=".7"/><polygon points="444.0,231.2 477.0,237.7 477.0,242.4 444.0,235.9" fill="#2455ee" fill-opacity="0.92"/><polygon points="444.0,228.6 477.0,235.1 477.0,237.7 444.0,231.2" fill="#5584f8" fill-opacity="0.92"/><path d="M444.0 228.6L477.0 235.1M444.0 235.9L477.0 242.4" stroke="#1a3ab0" stroke-width=".35" opacity=".7"/><polygon points="453.0,247.7 477.0,252.7 477.0,257.4 453.0,252.4" fill="#2455ee" fill-opacity="0.92"/><polygon points="453.0,245.1 477.0,250.1 477.0,252.7 453.0,247.7" fill="#5584f8" fill-opacity="0.92"/><path d="M453.0 245.1L477.0 250.1M453.0 252.4L477.0 257.4" stroke="#1a3ab0" stroke-width=".35" opacity=".7"/><polygon points="453.0,246.6 477.0,240.7 477.0,245.4 453.0,251.3" fill="#2455ee" fill-opacity="0.92"/><polygon points="453.0,244.0 477.0,238.1 477.0,240.7 453.0,246.6" fill="#5584f8" fill-opacity="0.92"/><path d="M453.0 244.0L477.0 238.1M453.0 251.3L477.0 245.4" stroke="#1a3ab0" stroke-width=".35" opacity=".7"/><polygon points="414.0,257.7 447.0,250.2 447.0,254.9 414.0,262.4" fill="#2455ee" fill-opacity="0.92"/><polygon points="414.0,255.1 447.0,247.6 447.0,250.2 414.0,257.7" fill="#5584f8" fill-opacity="0.92"/><path d="M414.0 255.1L447.0 247.6M414.0 262.4L447.0 254.9" stroke="#1a3ab0" stroke-width=".35" opacity=".7"/><polygon points="425.0,259.2 477.0,269.7 477.0,274.4 425.0,263.9" fill="#2455ee" fill-opacity="0.92"/><polygon points="425.0,256.6 477.0,267.1 477.0,269.7 425.0,259.2" fill="#5584f8" fill-opacity="0.92"/><path d="M425.0 256.6L477.0 267.1M425.0 263.9L477.0 274.4" stroke="#1a3ab0" stroke-width=".35" opacity=".7"/><polygon points="440.0,272.2 477.0,263.2 477.0,267.9 440.0,276.9" fill="#2455ee" fill-opacity="0.92"/><polygon points="440.0,269.6 477.0,260.6 477.0,263.2 440.0,272.2" fill="#5584f8" fill-opacity="0.92"/><path d="M440.0 269.6L477.0 260.6M440.0 276.9L477.0 267.9" stroke="#1a3ab0" stroke-width=".35" opacity=".7"/><polygon points="446.0,134.4 453.0,134.4 453.0,351.0 446.0,351.0" fill="#2f9f2f" fill-opacity="0.9" stroke="#145a14" stroke-width="0.6" stroke-linejoin="round"/><path d="M450.3 135.4V351" stroke="#145a14" stroke-width=".4" opacity=".6"/><polygon points="443.0,136.0 446.0,136.0 446.0,340.0 443.0,340.0" fill="#3aa63a" fill-opacity="0.5" stroke="#145a14" stroke-width="0.6" stroke-linejoin="round"/><path d="M445.3 137V340" stroke="#145a14" stroke-width=".4" opacity=".6"/><polygon points="396.5,140.0 402.0,141.0 425.5,146.0 425.5,345.0 402.0,340.0 396.5,338.0" fill="#3fd03f" fill-opacity="0.85" stroke="#145a14" stroke-width="0.5" stroke-linejoin="round"/><path d="M402 141V340M406 142V341M412 143V342M416.500 144V343M421 145V344" stroke="#145a14" stroke-width=".4" opacity=".55"/><polygon points="372.0,138.1 397.0,143.1 397.0,147.8 372.0,142.8" fill="#2455ee" fill-opacity="0.92"/><polygon points="372.0,135.5 397.0,140.5 397.0,143.1 372.0,138.1" fill="#5584f8" fill-opacity="0.92"/><path d="M372.0 135.5L397.0 140.5M372.0 142.8L397.0 147.8" stroke="#1a3ab0" stroke-width=".35" opacity=".7"/><path d="M397 147.0L425.500 153.0M397 141.0L425.500 147.0" stroke="#145a14" stroke-width=".4" opacity=".5"/><polygon points="397.0,141.0 425.5,147.0 425.5,153.0 397.0,147.0" fill="#2a9a6a" fill-opacity="0.35"/><polygon points="372.0,174.7 397.0,179.7 397.0,184.4 372.0,179.4" fill="#2455ee" fill-opacity="0.92"/><polygon points="372.0,172.1 397.0,177.1 397.0,179.7 372.0,174.7" fill="#5584f8" fill-opacity="0.92"/><path d="M372.0 172.1L397.0 177.1M372.0 179.4L397.0 184.4" stroke="#1a3ab0" stroke-width=".35" opacity=".7"/><path d="M397 183.6L425.500 189.6M397 177.6L425.500 183.6" stroke="#145a14" stroke-width=".4" opacity=".5"/><polygon points="397.0,177.6 425.5,183.6 425.5,189.6 397.0,183.6" fill="#2a9a6a" fill-opacity="0.35"/><polygon points="372.0,211.2 397.0,216.2 397.0,220.9 372.0,215.9" fill="#2455ee" fill-opacity="0.92"/><polygon points="372.0,208.6 397.0,213.6 397.0,216.2 372.0,211.2" fill="#5584f8" fill-opacity="0.92"/><path d="M372.0 208.6L397.0 213.6M372.0 215.9L397.0 220.9" stroke="#1a3ab0" stroke-width=".35" opacity=".7"/><path d="M397 220.1L425.500 226.1M397 214.1L425.500 220.1" stroke="#145a14" stroke-width=".4" opacity=".5"/><polygon points="397.0,214.1 425.5,220.1 425.5,226.1 397.0,220.1" fill="#2a9a6a" fill-opacity="0.35"/><polygon points="372.0,247.7 397.0,252.7 397.0,257.4 372.0,252.4" fill="#2455ee" fill-opacity="0.92"/><polygon points="372.0,245.1 397.0,250.1 397.0,252.7 372.0,247.7" fill="#5584f8" fill-opacity="0.92"/><path d="M372.0 245.1L397.0 250.1M372.0 252.4L397.0 257.4" stroke="#1a3ab0" stroke-width=".35" opacity=".7"/><path d="M397 256.6L425.500 262.6M397 250.6L425.500 256.6" stroke="#145a14" stroke-width=".4" opacity=".5"/><polygon points="397.0,250.6 425.5,256.6 425.5,262.6 397.0,256.6" fill="#2a9a6a" fill-opacity="0.35"/><polygon points="367.0,134.4 374.4,134.4 374.4,336.0 367.0,336.0" fill="#3aa63a" fill-opacity="0.85" stroke="#145a14" stroke-width="0.6" stroke-linejoin="round"/><path d="M371.5 135.4V336" stroke="#145a14" stroke-width=".4" opacity=".6"/><polygon points="425.0,313.2 477.0,323.7 477.0,328.4 425.0,317.9" fill="#2455ee" fill-opacity="0.92"/><polygon points="425.0,310.6 477.0,321.1 477.0,323.7 425.0,313.2" fill="#5584f8" fill-opacity="0.92"/><path d="M425.0 310.6L477.0 321.1M425.0 317.9L477.0 328.4" stroke="#1a3ab0" stroke-width=".35" opacity=".7"/><polygon points="440.0,326.2 477.0,317.2 477.0,321.9 440.0,330.9" fill="#2455ee" fill-opacity="0.92"/><polygon points="440.0,323.6 477.0,314.6 477.0,317.2 440.0,326.2" fill="#5584f8" fill-opacity="0.92"/><path d="M440.0 323.6L477.0 314.6M440.0 330.9L477.0 321.9" stroke="#1a3ab0" stroke-width=".35" opacity=".7"/><polygon points="453.0,301.7 477.0,306.7 477.0,311.4 453.0,306.4" fill="#2455ee" fill-opacity="0.92"/><polygon points="453.0,299.1 477.0,304.1 477.0,306.7 453.0,301.7" fill="#5584f8" fill-opacity="0.92"/><path d="M453.0 299.1L477.0 304.1M453.0 306.4L477.0 311.4" stroke="#1a3ab0" stroke-width=".35" opacity=".7"/><polygon points="453.0,300.6 477.0,294.7 477.0,299.4 453.0,305.3" fill="#2455ee" fill-opacity="0.92"/><polygon points="453.0,298.0 477.0,292.1 477.0,294.7 453.0,300.6" fill="#5584f8" fill-opacity="0.92"/><path d="M453.0 298.0L477.0 292.1M453.0 305.3L477.0 299.4" stroke="#1a3ab0" stroke-width=".35" opacity=".7"/><polygon points="409.0,293.2 447.0,300.6 447.0,305.3 409.0,297.9" fill="#2455ee" fill-opacity="0.92"/><polygon points="409.0,290.6 447.0,298.0 447.0,300.6 409.0,293.2" fill="#5584f8" fill-opacity="0.92"/><path d="M409.0 290.6L447.0 298.0M409.0 297.9L447.0 305.3" stroke="#1a3ab0" stroke-width=".35" opacity=".7"/><polygon points="372.0,298.5 477.0,274.0 477.0,322.0 397.0,304.0" fill="#3f9f98" fill-opacity="0.7" stroke="#1a5a56" stroke-width="0.4" stroke-linejoin="round"/><polygon points="425.5,300.0 477.0,285.0 477.0,356.0 425.5,347.0" fill="#2f8f88" fill-opacity="0.6" stroke="#1a5a56" stroke-width="0.4" stroke-linejoin="round"/><polygon points="372.0,298.8 397.0,304.0 397.0,343.0 372.0,337.0" fill="#2f8f88" fill-opacity="0.92" stroke="#1a5a56" stroke-width="0.5" stroke-linejoin="round"/><polygon points="397.0,304.0 425.5,310.0 425.5,347.0 397.0,343.0" fill="#2f9a6a" fill-opacity="0.45"/><polygon points="430.0,322.0 450.0,318.0 462.0,322.0 477.0,319.0 477.0,332.0 462.0,335.0 450.0,331.0 430.0,335.0" fill="#8fd0c8" fill-opacity="0.5"/><polygon points="366.0,338.5 404.0,346.5 404.0,352.5 366.0,344.5" fill="#6ab8b0" fill-opacity="0.9" stroke="#1a5a56" stroke-width="0.4" stroke-linejoin="round"/><polygon points="366.0,338.5 374.0,335.0 405.0,342.5 404.0,346.5" fill="#8fd0c8" fill-opacity="0.9" stroke="#1a5a56" stroke-width="0.4" stroke-linejoin="round"/><polygon points="416.5,348.0 447.0,355.0 447.0,361.0 416.5,354.0" fill="#6ab8b0" fill-opacity="0.9" stroke="#1a5a56" stroke-width="0.4" stroke-linejoin="round"/><polygon points="416.5,348.0 424.5,344.5 448.0,351.0 447.0,355.0" fill="#8fd0c8" fill-opacity="0.9" stroke="#1a5a56" stroke-width="0.4" stroke-linejoin="round"/><polygon points="447.0,353.0 477.0,359.5 477.0,365.5 447.0,359.0" fill="#6ab8b0" fill-opacity="0.9" stroke="#1a5a56" stroke-width="0.4" stroke-linejoin="round"/><polygon points="447.0,353.0 455.0,349.5 478.0,355.5 477.0,359.5" fill="#8fd0c8" fill-opacity="0.9" stroke="#1a5a56" stroke-width="0.4" stroke-linejoin="round"/><g stroke-width="1.200" fill="none"><path d="M772 110V96.500" stroke="#2a4af0"/><path d="M772 110L761 108" stroke="#1a8a2a"/><path d="M772 110L783 108" stroke="#e22"/></g><path d="M770.500 98.500h3L772 95z" fill="#2a4af0"/><path d="M761.500 106.500v3.500l-2.500-2z" fill="#1a8a2a"/><path d="M782 106.500v3.500l2.500-2z" fill="#e22"/></svg>
<div class="b" style="left:228px;top:396px;width:564px;height:25px;background:#e6e6e6;"></div>
<div class="t" style="left:229.5px;top:404.8px;font-size:11.2px;color:#444;">Παράθυρο Εργασίας 1</div>
<div class="b" style="left:228px;top:420px;width:564px;height:160px;background:#f3f3f3;"></div>
<div class="b" style="left:233px;top:422px;width:36.5px;height:9.5px;background:#d6d6d6;"></div>
<div class="t" style="left:251.2px;top:424px;font-size:6.1px;color:#333;transform:translateX(-50%);">Επισήμανση</div>
<div class="b" style="left:272px;top:422px;width:26.5px;height:9.5px;background:#d6d6d6;"></div>
<div class="t" style="left:285.2px;top:424px;font-size:6.1px;color:#333;transform:translateX(-50%);">Επιλογή</div>
<div class="t" style="left:233px;top:441.6px;font-size:7.5px;color:#0b70cc;font-family:'DejaVu Sans','Liberation Sans',sans-serif;font-weight:bold;letter-spacing:.4px;">Διαχείριση Βιβλιοθήκης Υλικών και Διατομών</div>
<div class="t" style="left:233px;top:458.2px;font-size:7.5px;color:#0b70cc;font-family:'DejaVu Sans','Liberation Sans',sans-serif;font-weight:bold;letter-spacing:.33px;">Μαζική Τροποποίηση Υλικών Έργου ή Βιβλιοθήκης</div>
<div class="b" style="left:233px;top:472px;width:360px;height:1px;background:#0b78d0;"></div>
<div class="b" style="left:233px;top:480px;width:61.8px;height:48.5px;background:#0078d4;"></div>
<svg style="left:255px;top:484px" width="18" height="17" viewBox="0 0 18 17"><path d="M2.5 3.200l1.600 1v11.800l-1.600-1z" fill="#e8861f"/><path d="M4.1 4.200l7-2.600v11.800l-7 2.600z" fill="#f7a545"/><path d="M2.5 3.200l7-2.700 1.600 1.100-7 2.600z" fill="#fff6e6"/><rect x="10" y="10.300" width="6" height="6" fill="#7458c6"/><rect x="11.300" y="10.300" width="3.300" height="2.200" fill="#efe8ff"/><rect x="11.600" y="13.800" width="2.800" height="2.500" fill="#d8d0f0"/></svg>
<div class="t" style="left:264.4px;top:506.5px;font-size:7.3px;color:#fff;transform:translateX(-50%);font-family:'DejaVu Sans','Liberation Sans',sans-serif;font-weight:bold;letter-spacing:.55px;">Καταχώρηση</div>
<div class="t" style="left:264.4px;top:516.8px;font-size:7.3px;color:#fff;transform:translateX(-50%);font-family:'DejaVu Sans','Liberation Sans',sans-serif;font-weight:bold;letter-spacing:.55px;">Ως</div>
<div class="b" style="left:299.2px;top:480px;width:61.8px;height:48.5px;background:#0078d4;"></div>
<svg style="left:321.2px;top:484px" width="18" height="17" viewBox="0 0 18 17"><path d="M0.5 3.200l1.600 1v11.800l-1.600-1z" fill="#eab27e"/><path d="M2.1 4.200l7-2.600v11.800l-7 2.600z" fill="#f6c28e"/><path d="M0.5 3.200l7-2.700 1.600 1.100-7 2.600z" fill="#fff6e6"/><path d="M5 3.200l1.600 1v11.800l-1.600-1z" fill="#e8861f"/><path d="M6.6 4.200l7-2.600v11.800l-7 2.600z" fill="#f7a545"/><path d="M5 3.200l7-2.700 1.600 1.100-7 2.600z" fill="#fff6e6"/><path d="M4 6.500c.5 3 2 4.500 4.500 5" stroke="#5a6ad8" stroke-width="1.300" fill="none"/><path d="M7.500 10l2 1.800-2.600.6z" fill="#5a6ad8"/><rect x="12" y="10.800" width="5.500" height="5.500" fill="#7458c6"/><rect x="13.200" y="10.800" width="3" height="2" fill="#efe8ff"/><rect x="13.400" y="14" width="2.600" height="2.300" fill="#d8d0f0"/></svg>
<div class="t" style="left:330.59999999999997px;top:506.5px;font-size:7.3px;color:#fff;transform:translateX(-50%);font-family:'DejaVu Sans','Liberation Sans',sans-serif;font-weight:bold;letter-spacing:.55px;">Αλλαγή</div>
<div class="t" style="left:330.59999999999997px;top:516.8px;font-size:7.3px;color:#fff;transform:translateX(-50%);font-family:'DejaVu Sans','Liberation Sans',sans-serif;font-weight:bold;letter-spacing:.55px;">Βιβλιοθήκης</div>
<div class="b" style="left:365.5px;top:480px;width:61.8px;height:48.5px;background:#0078d4;"></div>
<svg style="left:387.5px;top:484px" width="18" height="17" viewBox="0 0 18 17"><path d="M1 3.200l1.600 1v11.800l-1.600-1z" fill="#e8861f"/><path d="M2.6 4.200l7-2.600v11.800l-7 2.600z" fill="#f7a545"/><path d="M1 3.200l7-2.700 1.600 1.100-7 2.600z" fill="#fff6e6"/><path d="M7 3.200l1.600 1v11.800l-1.600-1z" fill="#e8861f"/><path d="M8.6 4.200l7-2.600v11.800l-7 2.600z" fill="#f7a545"/><path d="M7 3.200l7-2.700 1.600 1.100-7 2.600z" fill="#fff6e6"/></svg>
<div class="t" style="left:396.9px;top:506.5px;font-size:7.3px;color:#fff;transform:translateX(-50%);font-family:'DejaVu Sans','Liberation Sans',sans-serif;font-weight:bold;letter-spacing:.55px;">Βιβλιοθήκη</div>
<div class="t" style="left:396.9px;top:516.8px;font-size:7.3px;color:#fff;transform:translateX(-50%);font-family:'DejaVu Sans','Liberation Sans',sans-serif;font-weight:bold;letter-spacing:.55px;">Εκκίνησης</div>
<div class="b" style="left:431.8px;top:480px;width:128px;height:48.5px;background:#0078d4;"></div>
<svg style="left:465px;top:485.500px" width="17.500" height="15.500" viewBox="0 0 17.500 15.500"><path d="M4.500 1.200h6.500l3 3V14H4.500z" fill="#dfe8f4" stroke="#b0bfd4" stroke-width=".5"/><path d="M11 1.200v3h3" fill="#c4d2e6" stroke="#b0bfd4" stroke-width=".4"/><rect x="0" y="2.200" width="9" height="3.600" fill="#e8902a"/><rect x="10.500" y="9.500" width="6.500" height="5.500" fill="#3a3a3a"/></svg>
<div class="t" style="left:450.6px;top:506.5px;font-size:7.3px;color:#fff;font-family:'DejaVu Sans','Liberation Sans',sans-serif;font-weight:bold;letter-spacing:.55px;">Υλικά από</div>
<div class="t" style="left:448.6px;top:516.8px;font-size:7.3px;color:#fff;font-family:'DejaVu Sans','Liberation Sans',sans-serif;font-weight:bold;letter-spacing:.55px;">αρχείο XML</div>
<div class="b" style="left:233px;top:533px;width:128px;height:47px;background:#4f9d3a;"></div>
<svg style="left:290.500px;top:544.500px" width="13" height="14" viewBox="0 0 13 14"><path d="M2 6.500C2.500 3.500 5 2.500 8 3V1l3.500 3L8 7V5C5.500 4.600 3.500 5 2 6.500z" fill="#f7a81a"/><path d="M11 7.500C10.500 10.500 8 11.500 5 11v2L1.500 10 5 7v2c2.500.4 4.500 0 6-1.500z" fill="#f7a81a"/></svg>
<div class="t" style="left:297.5px;top:564.3px;font-size:7.3px;color:#fff;transform:translateX(-50%);font-family:'DejaVu Sans','Liberation Sans',sans-serif;font-weight:bold;letter-spacing:.55px;">Μαζική Αλλαγή Υλικών</div>
<div class="b" style="left:431.8px;top:533px;width:163.2px;height:47px;background:#0078d4;"></div>
<svg style="left:505.400px;top:543.500px" width="17.500" height="15.500" viewBox="0 0 17.500 15.500"><path d="M4.500 1.200h6.500l3 3V14H4.500z" fill="#dfe8f4" stroke="#b0bfd4" stroke-width=".5"/><path d="M11 1.200v3h3" fill="#c4d2e6" stroke="#b0bfd4" stroke-width=".4"/><rect x="0" y=".3" width="8.200" height="3.600" fill="#e8902a"/><rect x="10.500" y="9.500" width="6.500" height="5.500" fill="#3a3a3a"/><rect x="11.600" y="9.500" width="4.300" height="2" fill="#ccc"/></svg>
<div class="t" style="left:513.5px;top:564.3px;font-size:7.3px;color:#fff;transform:translateX(-50%);font-family:'DejaVu Sans','Liberation Sans',sans-serif;font-weight:bold;letter-spacing:.55px;">Μεταλλικές Συνδέσεις σε XML</div>
<div class="b" style="left:228px;top:580px;width:564px;height:12px;background:#e9e9e9;border-top:.6px solid #d4d4d4"></div>
<svg style="left:230px;top:582px" width="6" height="8" viewBox="0 0 6 8"><rect x=".5" y=".5" width="5" height="7" fill="#fff" stroke="#6a4a2a" stroke-width=".9"/></svg>
<div class="t" style="left:238px;top:583px;font-size:6.25px;color:#444;">Εμφ. Αποτελ.</div>
<div class="b" style="left:280.5px;top:580.5px;width:80px;height:11.5px;background:#fcfcfc;border:.5px solid #ccc;border-top:none"></div>
<svg style="left:282.500px;top:581.500px" width="9" height="9" viewBox="0 0 10 10"><rect x=".5" y="1" width="8" height="6.500" fill="#ececec" stroke="#b8c4dc" stroke-width=".5"/><rect x=".5" y="1" width="8" height="1.800" fill="#7aa4e6"/><text x="5.800" y="9.700" font-size="5.500" font-weight="bold" fill="#b8242c" font-family="Liberation Sans,sans-serif">1</text></svg>
<div class="t" style="left:293px;top:583px;font-size:6.25px;color:#222;">Παράθυρο Εργασίας 1</div>
<svg style="left:362.500px;top:581.500px" width="9" height="9" viewBox="0 0 10 10"><rect x=".5" y="1" width="8" height="6.500" fill="#ececec" stroke="#b8c4dc" stroke-width=".5"/><rect x=".5" y="1" width="8" height="1.800" fill="#7aa4e6"/><text x="5.800" y="9.700" font-size="5.500" font-weight="bold" fill="#b8242c" font-family="Liberation Sans,sans-serif">2</text></svg>
<div class="t" style="left:372.5px;top:583px;font-size:6.25px;color:#444;">Παράθυρο Εργασίας 2</div>
<svg style="left:442px;top:582px" width="8" height="8" viewBox="0 0 8 8"><path d="M.5 4L4 .8 7.500 4" fill="none" stroke="#d88a1a" stroke-width="1"/><path d="M1.500 4v3.500h5V4L4 1.800z" fill="#fff" stroke="#b97a2a" stroke-width=".5"/><rect x="3.200" y="5" width="1.600" height="2.500" fill="#6a8ac8"/></svg>
<div class="t" style="left:451.5px;top:583px;font-size:6.25px;color:#444;">Βοήθεια</div>
<div class="b" style="left:792px;top:75px;width:232px;height:24px;background:#e6e6e6;"></div>
<div class="t" style="left:797px;top:81.3px;font-size:11.6px;color:#444;">Προσθήκη Στοιχείων</div>
<svg style="left:1020px;top:78px" width="4" height="5" viewBox="0 0 4 5"><path d="M3.500 .5L.8 2.500l2.700 2z" fill="#555"/></svg>
<div class="b" style="left:796px;top:99px;width:228px;height:14px;background:#f0f0f0;"></div>
<svg style="left:802.5px;top:101.5px" width="10" height="9" viewBox="0 0 10 9"><path d="M1 1h3v4h4v3H1z" fill="#4fb05a" stroke="#2a7a34" stroke-width=".7"/></svg>
<div class="t" style="left:812.5px;top:102.5px;font-size:6.4px;color:#333;">Κατ.</div>
<svg style="left:829.5px;top:101.5px" width="10" height="9" viewBox="0 0 10 9"><path d="M1 2v6M8 2v6" stroke="#8fc08f" stroke-width="1"/><rect x="1.500" y="4" width="6" height="3.500" fill="#9fc4f0"/></svg>
<div class="t" style="left:839.5px;top:102.5px;font-size:6.4px;color:#aaa;">Ορ.</div>
<svg style="left:853px;top:101.5px" width="10" height="9" viewBox="0 0 10 9"><path d="M2 8L5 1l2 2-2 1 2 1.500z" fill="#7fc07f" stroke="#5aa05a" stroke-width=".4"/></svg>
<div class="t" style="left:862.5px;top:102.5px;font-size:6.4px;color:#aaa;">Τεγ.</div>
<svg style="left:878.5px;top:101.5px" width="10" height="9" viewBox="0 0 10 9"><path d="M1 1l7 7M8 1L1 8" stroke="#e07a5a" stroke-width="1"/></svg>
<div class="t" style="left:888.5px;top:102.5px;font-size:6.4px;color:#aaa;">Συνδ.</div>
<div class="b" style="left:908px;top:100.5px;width:0.6px;height:10px;background:#dedede;"></div>
<svg style="left:912.5px;top:101.5px" width="10" height="9" viewBox="0 0 10 9"><rect x="1" y="3" width="6" height="5" fill="#e8eef8" stroke="#567" stroke-width=".6"/><path d="M2 3V1.500h6V6" fill="none" stroke="#567" stroke-width=".6"/><path d="M5 1l3 1-1.500 2z" fill="#e8a020"/></svg>
<div class="t" style="left:922.5px;top:102.5px;font-size:6.4px;color:#333;">Αλλαγή</div>
<div class="b" style="left:947px;top:100.5px;width:0.6px;height:10px;background:#dedede;"></div>
<svg style="left:951px;top:101.5px" width="10" height="9" viewBox="0 0 10 9"><path d="M3.700 1h2.600v2.700h2.700v2.600H6.300v2.700H3.700V6.300H1V3.700h2.700z" fill="#9ad04a" stroke="#5a9a20" stroke-width=".5"/></svg>
<div class="t" style="left:961.5px;top:102.5px;font-size:6.4px;color:#333;">Νέα</div>
<div class="b" style="left:977.5px;top:100.5px;width:0.6px;height:10px;background:#dedede;"></div>
<svg style="left:981px;top:101.5px" width="10" height="9" viewBox="0 0 10 9"><circle cx="4.500" cy="4.500" r="3.500" fill="#cfe0ff" stroke="#234" stroke-width=".7"/><path d="M4.500 2v5M2 4.500h5" stroke="#234" stroke-width=".7"/><path d="M7 7l2.500 2" stroke="#c80" stroke-width="1"/></svg>
<svg style="left:992.5px;top:101.5px" width="10" height="9" viewBox="0 0 10 9"><rect x=".5" y=".8" width="7" height="5.500" fill="#fff" stroke="#567" stroke-width=".6"/><circle cx="6.500" cy="6" r="1.800" fill="#eef" stroke="#234" stroke-width=".6"/><path d="M7.800 7.300L9.500 8.800" stroke="#c80" stroke-width=".9"/></svg>
<div class="t" style="left:1018.5px;top:100.2px;font-size:6.5px;color:#666;">»</div>
<div class="b" style="left:796.5px;top:114px;width:228px;height:20px;background:#fff;border-left:1px solid #9a9a9a;border-top:1px solid #9a9a9a;"></div>
<div class="t" style="left:910.8px;top:117.6px;font-size:6.6px;color:#222;transform:translateX(-50%);font-family:'Liberation Mono',monospace;letter-spacing:.67px;">12Φ16</div>
<div class="b" style="left:792px;top:540px;width:232px;height:36px;background:#e8e8e8;"></div>
<div class="b" style="left:796px;top:540px;width:154px;height:31.5px;background:#ededed;"></div>
<div class="b" style="left:796px;top:550.2px;width:153.5px;height:0.8px;background:#9a9a9a;"></div>
<div class="b" style="left:796px;top:560.5px;width:153.5px;height:0.8px;background:#9a9a9a;"></div>
<div class="b" style="left:796px;top:570.8px;width:153.5px;height:0.8px;background:#9a9a9a;"></div>
<div class="b" style="left:796px;top:540px;width:1px;height:31.5px;background:#444;"></div>
<div class="b" style="left:804.3px;top:540px;width:1.2px;height:31.5px;background:#333;"></div>
<div class="b" style="left:814px;top:540px;width:0.7px;height:31.5px;background:#888;"></div>
<div class="b" style="left:862.3px;top:540px;width:0.7px;height:31.5px;background:#888;"></div>
<div class="b" style="left:871.3px;top:540px;width:0.7px;height:31.5px;background:#888;"></div>
<div class="b" style="left:909.5px;top:540px;width:0.7px;height:31.5px;background:#888;"></div>
<div class="b" style="left:936px;top:540px;width:0.7px;height:31.5px;background:#888;"></div>
<div class="b" style="left:949.4px;top:540px;width:0.7px;height:31.5px;background:#aaa;"></div>
<div class="t" style="left:816px;top:542.5px;font-size:6.4px;color:#333;">R80/30</div>
<div class="t" style="left:879.5px;top:542.5px;font-size:6.4px;color:#333;">E201610</div>
<div class="t" style="left:915.5px;top:542.5px;font-size:6.4px;color:#333;">11.93</div>
<div class="b" style="left:937.5px;top:541.3px;width:11px;height:9px;background:#f4f4f4;border:.5px solid #ccc"></div>
<div class="t" style="left:943.3px;top:541.7px;font-size:6.4px;color:#333;transform:translateX(-50%);letter-spacing:.7px">...</div>
<div class="t" style="left:816px;top:552.1px;font-size:6.4px;color:#333;">R90/25</div>
<div class="t" style="left:879.5px;top:552.1px;font-size:6.4px;color:#333;">E201610</div>
<div class="t" style="left:915.5px;top:552.1px;font-size:6.4px;color:#333;">12.73</div>
<div class="b" style="left:937.5px;top:550.9px;width:11px;height:9px;background:#f4f4f4;border:.5px solid #ccc"></div>
<div class="t" style="left:943.3px;top:551.3000000000001px;font-size:6.4px;color:#333;transform:translateX(-50%);letter-spacing:.7px">...</div>
<div class="t" style="left:816px;top:562.2px;font-size:6.4px;color:#333;">R90/30</div>
<div class="t" style="left:879.5px;top:562.2px;font-size:6.4px;color:#333;">E201610</div>
<div class="t" style="left:915.5px;top:562.2px;font-size:6.4px;color:#333;">10.61</div>
<div class="b" style="left:937.5px;top:561.0px;width:11px;height:9px;background:#f4f4f4;border:.5px solid #ccc"></div>
<div class="t" style="left:943.3px;top:561.4000000000001px;font-size:6.4px;color:#333;transform:translateX(-50%);letter-spacing:.7px">...</div>
<div class="b" style="left:796px;top:571.5px;width:228px;height:4px;background:#cfcfcf;"></div>
<svg style="left:894px;top:572.800px" width="31" height="2" viewBox="0 0 31 2"><rect x="0.0" y=".3" width="1.200" height="1.200" fill="#8f8f8f"/><rect x="2.5" y=".3" width="1.200" height="1.200" fill="#8f8f8f"/><rect x="5.0" y=".3" width="1.200" height="1.200" fill="#8f8f8f"/><rect x="7.5" y=".3" width="1.200" height="1.200" fill="#8f8f8f"/><rect x="10.0" y=".3" width="1.200" height="1.200" fill="#8f8f8f"/><rect x="12.5" y=".3" width="1.200" height="1.200" fill="#8f8f8f"/><rect x="15.0" y=".3" width="1.200" height="1.200" fill="#8f8f8f"/><rect x="17.5" y=".3" width="1.200" height="1.200" fill="#8f8f8f"/><rect x="20.0" y=".3" width="1.200" height="1.200" fill="#8f8f8f"/><rect x="22.5" y=".3" width="1.200" height="1.200" fill="#8f8f8f"/><rect x="25.0" y=".3" width="1.200" height="1.200" fill="#8f8f8f"/><rect x="27.5" y=".3" width="1.200" height="1.200" fill="#8f8f8f"/><rect x="30.0" y=".3" width="1.200" height="1.200" fill="#8f8f8f"/></svg>
<div class="b" style="left:796px;top:575.5px;width:228px;height:17px;background:#f1f1f1;"></div>
<svg style="left:848px;top:578.5px" width="10" height="10" viewBox="0 0 10 10"><path d="M5 1v5.500" stroke="#d8b000" stroke-width="1.600"/><path d="M3.500 8.500h3.500" stroke="#b89000" stroke-width="1.200"/><path d="M4 1.500h1" stroke="#b89000" stroke-width="1"/></svg>
<svg style="left:861.5px;top:578.5px" width="10" height="10" viewBox="0 0 10 10"><path d="M1 3l4-1.800L9 3 5 4.800z" fill="#b8c4d8" stroke="#567" stroke-width=".5"/><path d="M1 5l4 1.800L9 5M1 7l4 1.800L9 7" fill="none" stroke="#567" stroke-width=".8"/></svg>
<svg style="left:875px;top:578.5px" width="10" height="10" viewBox="0 0 10 10"><rect x="-1.500" y="-2" width="13" height="14" fill="#d4d4d4"/><path d="M1.500 1v7.500H9" fill="none" stroke="#333" stroke-width=".8"/><rect x="3" y="3" width="4" height="4" fill="#4fb05a"/><path d="M5 1l3 3" stroke="#2a7a34" stroke-width=".8"/></svg>
<svg style="left:888.5px;top:578.5px" width="10" height="10" viewBox="0 0 10 10"><rect x="1" y="2" width="7" height="7" fill="#fff" stroke="#333" stroke-width=".8"/><circle cx="4.500" cy="5.500" r="1.800" fill="#e33"/><path d="M6.500 .8h2.700v2.700" fill="#4fb05a" stroke="#2a7a34" stroke-width=".6"/></svg>
<svg style="left:902.5px;top:578.5px" width="10" height="10" viewBox="0 0 10 10"><path d="M1 1v8h8" fill="none" stroke="#936" stroke-width=".8"/><path d="M2 7l2.500-3 2 1.500L9 2" fill="none" stroke="#b4a" stroke-width=".8"/><rect x="5.500" y="1" width="3.500" height="2" fill="#333"/></svg>
<svg style="left:916.5px;top:578.5px" width="10" height="10" viewBox="0 0 10 10"><path d="M1 1v8h8" fill="none" stroke="#444" stroke-width=".8"/><rect x="2.500" y="5" width="2" height="4" fill="#3a3"/><rect x="4.500" y="2" width="2" height="7" fill="#e33"/><rect x="6.500" y="6" width="2" height="3" fill="#e90"/></svg>
<svg style="left:930.5px;top:578.5px" width="10" height="10" viewBox="0 0 10 10"><path d="M2 9L5 1l3 1.500L5 9z" fill="#c8542a"/><path d="M5 1l3 1.500-.8 2z" fill="#6a8a3a"/><path d="M1 9h6" stroke="#642" stroke-width="1"/></svg>
<svg style="left:944.5px;top:578.5px" width="10" height="10" viewBox="0 0 10 10"><rect x="1" y="1" width="8" height="3.500" fill="#446" stroke="#223" stroke-width=".4"/><rect x="2.500" y="1.800" width="4" height="1.600" fill="#9cf"/><path d="M2 5.500v3.500" stroke="#e33" stroke-width="1.200"/><path d="M4 5.500v3.500" stroke="#3a3" stroke-width="1.200"/><path d="M6 5.500v3.500" stroke="#33e" stroke-width="1.200"/><path d="M8 5.500v3.500" stroke="#ec0" stroke-width="1.200"/></svg>
<svg style="left:958.5px;top:578.5px" width="10" height="10" viewBox="0 0 10 10"><path d="M2 1h4.500L8.500 3v6H2z" fill="#e8eef8" stroke="#678" stroke-width=".6"/><rect x="3.500" y="4.500" width="3.500" height="3" fill="#6a8ac8"/><circle cx="5" cy="5.500" r=".7" fill="#ec0"/></svg>
<svg style="left:972.5px;top:578.5px" width="10" height="10" viewBox="0 0 10 10"><path d="M2 1.500h5.500l1 1V9H2z" fill="#fff" stroke="#a66" stroke-width=".9"/></svg>
<svg style="left:986.5px;top:578.5px" width="10" height="10" viewBox="0 0 10 10"><rect x="1" y="1.500" width="8" height="7.500" fill="#333"/><rect x="2" y="3.500" width="3" height="4.500" fill="#c8c8e8"/><rect x="6" y="5.500" width="2.200" height="2.500" fill="#fff"/></svg>
<svg style="left:1000.5px;top:578.5px" width="10" height="10" viewBox="0 0 10 10"><defs><linearGradient id="rb1" x1="0" x2="1" y1="0" y2="1"><stop offset="0" stop-color="#f33"/><stop offset=".3" stop-color="#fc0"/><stop offset=".55" stop-color="#3c3"/><stop offset=".8" stop-color="#39f"/><stop offset="1" stop-color="#c3c"/></linearGradient></defs><circle cx="5" cy="5" r="4.200" fill="url(#rb1)"/><circle cx="5" cy="5" r="1.200" fill="#fff" opacity=".8"/></svg>
<div class="t" style="left:1016.5px;top:577.5px;font-size:5px;color:#666;">»</div>
<svg style="left:1017.500px;top:585px" width="4" height="3" viewBox="0 0 4 3"><path d="M.5 .5h3L2 2.500z" fill="#555"/></svg>
<div class="b" style="left:476.4px;top:124.5px;width:545.8px;height:418.7px;background:#f0f0f0;border:1px solid #7fb0ee;box-shadow:0 7px 20px 1px rgba(0,0,0,.33);"></div>
<div class="b" style="left:477.4px;top:125.5px;width:543.8px;height:22px;background:linear-gradient(#f2f4fb 0,#f2f4fb 70%,#f0f0f0 100%)"></div>
<svg style="left:482px;top:129.500px" width="8" height="8" viewBox="0 0 8 8"><rect x=".3" y=".3" width="7.400" height="7.400" fill="#fff" stroke="#bbb" stroke-width=".5"/><rect x="1.200" y="2" width="3.200" height="4" fill="#3a9a8a"/><path d="M5.500 1.500v5" stroke="#8ac" stroke-width=".8"/></svg>
<div class="t" style="left:493px;top:130px;font-size:6.4px;color:#333;">Δεδομένα Οπλισμού Διατομής R40/40_1 ( Υποστύλωμα )</div>
<svg style="left:1010.500px;top:130px" width="6" height="6" viewBox="0 0 6 6"><path d="M.5 .5l5 5M5.500 .5l-5 5" stroke="#333" stroke-width=".7"/></svg>
<div class="b" style="left:478.4px;top:142.8px;width:440.2px;height:97.6px;background:#f3f3f3;border-left:1.200px solid #8a8a8a;border-top:1.200px solid #8a8a8a;border-right:.6px solid #ddd;border-bottom:.6px solid #e2e2e2"></div>
<div class="b" style="left:479px;top:143.4px;width:436px;height:42.2px;background:#f0f0f0;"></div>
<div class="b" style="left:479px;top:185.6px;width:15.4px;height:21.6px;background:#f0f0f0;"></div>
<div class="b" style="left:494.4px;top:185.6px;width:264.1px;height:10.7px;background:#c6d8fa;"></div>
<div class="b" style="left:494.4px;top:196.3px;width:264.1px;height:10.9px;background:#fff;"></div>
<div class="b" style="left:758.5px;top:185.6px;width:140.7px;height:21.6px;background:#e6e6e6;"></div>
<div class="b" style="left:899.2px;top:185.6px;width:15.8px;height:10.7px;background:#c6d8fa;"></div>
<div class="b" style="left:899.2px;top:196.3px;width:15.8px;height:10.9px;background:#fff;"></div>
<div class="b" style="left:494.4px;top:185.6px;width:15.6px;height:10.7px;background:#d6e2f6;"></div>
<div class="b" style="left:479px;top:142.95000000000002px;width:436px;height:0.9px;background:#686868;"></div>
<div class="b" style="left:479px;top:185.15px;width:436px;height:0.9px;background:#686868;"></div>
<div class="b" style="left:479px;top:195.9px;width:436px;height:0.8px;background:#777;"></div>
<div class="b" style="left:479px;top:206.75px;width:436px;height:0.9px;background:#686868;"></div>
<div class="b" style="left:556.5px;top:161.75px;width:101.20000000000005px;height:0.9px;background:#686868;"></div>
<div class="b" style="left:688px;top:161.75px;width:70.5px;height:0.9px;background:#686868;"></div>
<div class="b" style="left:899.2px;top:161.75px;width:15.799999999999955px;height:0.9px;background:#686868;"></div>
<div class="b" style="left:618.4px;top:173.95000000000002px;width:39.30000000000007px;height:0.9px;background:#686868;"></div>
<div class="b" style="left:719.4px;top:173.95000000000002px;width:195.60000000000002px;height:0.9px;background:#686868;"></div>
<div class="b" style="left:478.55px;top:143.4px;width:0.9px;height:63.79999999999998px;background:#686868;"></div>
<div class="b" style="left:493.95px;top:143.4px;width:0.9px;height:63.79999999999998px;background:#686868;"></div>
<div class="b" style="left:509.55px;top:143.4px;width:0.9px;height:63.79999999999998px;background:#686868;"></div>
<div class="b" style="left:556.05px;top:143.4px;width:0.9px;height:63.79999999999998px;background:#686868;"></div>
<div class="b" style="left:617.9499999999999px;top:143.4px;width:0.9px;height:63.79999999999998px;background:#686868;"></div>
<div class="b" style="left:657.25px;top:143.4px;width:0.9px;height:63.79999999999998px;background:#686868;"></div>
<div class="b" style="left:687.55px;top:143.4px;width:0.9px;height:63.79999999999998px;background:#686868;"></div>
<div class="b" style="left:758.05px;top:143.4px;width:0.9px;height:63.79999999999998px;background:#686868;"></div>
<div class="b" style="left:898.75px;top:143.4px;width:0.9px;height:63.79999999999998px;background:#686868;"></div>
<div class="b" style="left:914.55px;top:143.4px;width:0.9px;height:63.79999999999998px;background:#686868;"></div>
<div class="b" style="left:586.8499999999999px;top:162.2px;width:0.9px;height:45.0px;background:#686868;"></div>
<div class="b" style="left:718.9499999999999px;top:162.2px;width:0.9px;height:45.0px;background:#686868;"></div>
<div class="t" style="left:486.7px;top:161.9px;font-size:6.3px;color:#333;transform:translateX(-50%);">α/α</div>
<div class="t" style="left:533.2px;top:161.9px;font-size:6.3px;color:#333;transform:translateX(-50%);">Όνομα</div>
<div class="t" style="left:587.5px;top:150.20000000000002px;font-size:6.3px;color:#333;transform:translateX(-50%);">Χάλυβας</div>
<div class="t" style="left:572px;top:171.9px;font-size:6.3px;color:#333;transform:translateX(-50%);">Ράβδ.</div>
<div class="t" style="left:603px;top:171.9px;font-size:6.3px;color:#333;transform:translateX(-50%);">Συνδ.</div>
<div class="t" style="left:638px;top:150.20000000000002px;font-size:6.3px;color:#333;transform:translateX(-50%);">Επικάλυψη</div>
<div class="t" style="left:638px;top:165.70000000000002px;font-size:6.3px;color:#333;transform:translateX(-50%);">c</div>
<div class="t" style="left:638px;top:177.4px;font-size:6.3px;color:#333;transform:translateX(-50%);">[cm]</div>
<div class="t" style="left:673px;top:157.9px;font-size:6.3px;color:#333;transform:translateX(-50%);">Περ/κός</div>
<div class="t" style="left:673px;top:166.4px;font-size:6.3px;color:#333;transform:translateX(-50%);">Συνδ.</div>
<div class="t" style="left:723.5px;top:146.70000000000002px;font-size:6.3px;color:#333;transform:translateX(-50%);">Τετραγωνίδια Κανάβου</div>
<div class="t" style="left:723.5px;top:154.9px;font-size:6.3px;color:#333;transform:translateX(-50%);">για:</div>
<div class="t" style="left:704px;top:171.9px;font-size:6.3px;color:#333;transform:translateX(-50%);">Φ</div>
<div class="t" style="left:739px;top:165.70000000000002px;font-size:6.3px;color:#333;transform:translateX(-50%);">w</div>
<div class="t" style="left:739px;top:177.4px;font-size:6.3px;color:#333;transform:translateX(-50%);">mm</div>
<div class="t" style="left:829px;top:156.4px;font-size:6.3px;color:#333;transform:translateX(-50%);">Οπλισμός Περιοχής</div>
<div class="t" style="left:829px;top:177.6px;font-size:6.3px;color:#333;transform:translateX(-50%);">As [cm<span style="font-size:4.600px;position:relative;top:-2.300px">2</span> (%Ac)]</div>
<div class="t" style="left:492.5px;top:188.1px;font-size:6.3px;color:#333;transform:translateX(-100%);">1</div>
<svg style="left:498.500px;top:187.4px" width="8" height="7" viewBox="0 0 8 7"><path d="M.6 .6h2.800v3h4v2.800H.6z" fill="#d8f0dc" stroke="#3aa85a" stroke-width=".8"/><path d="M1.500 5h1M4 5h1" stroke="#3aa85a" stroke-width=".6"/></svg>
<div class="t" style="left:511.5px;top:188.1px;font-size:6.3px;color:#333;">RS0</div>
<div class="t" style="left:572px;top:188.8px;font-size:6.3px;color:#333;transform:translateX(-50%);">B500C</div>
<div class="t" style="left:603px;top:188.8px;font-size:6.3px;color:#333;transform:translateX(-50%);">B500C</div>
<div class="t" style="left:656.3px;top:188.1px;font-size:6.3px;color:#333;transform:translateX(-100%);">2.50</div>
<div class="t" style="left:673px;top:188.8px;font-size:6.3px;color:#333;transform:translateX(-50%);">Φ08</div>
<div class="t" style="left:704px;top:188.8px;font-size:6.3px;color:#333;transform:translateX(-50%);">Φ20</div>
<div class="t" style="left:757.2px;top:188.1px;font-size:6.3px;color:#333;transform:translateX(-100%);">40.0</div>
<svg style="left:760.0px;top:186.9px" width="8.500" height="8.300" viewBox="0 0 8 8"><rect x=".3" y=".3" width="7.400" height="7.400" fill="#d8d8d8" stroke="#555" stroke-width=".6"/><path d="M4.600 1.200L3.400 6.800" stroke="#d22" stroke-width="1.100"/></svg>
<svg style="left:769.6px;top:186.9px" width="8.500" height="8.300" viewBox="0 0 8 8"><rect x=".3" y=".3" width="7.400" height="7.400" fill="#d8d8d8" stroke="#555" stroke-width=".6"/><path d="M1.200 5.500L4 1.800l2.800 3.700z" fill="#7a7a20"/><path d="M1 5.500h6" stroke="#d22" stroke-width=".9"/></svg>
<svg style="left:779.2px;top:186.9px" width="8.500" height="8.300" viewBox="0 0 8 8"><rect x=".3" y=".3" width="7.400" height="7.400" fill="#d8d8d8" stroke="#555" stroke-width=".6"/><path d="M2.800 1.500v4M5.300 1.500v5" stroke="#114" stroke-width="1"/><circle cx="2.500" cy="6" r="1" fill="#d22"/></svg>
<svg style="left:788.8px;top:186.9px" width="8.500" height="8.300" viewBox="0 0 8 8"><rect x=".3" y=".3" width="7.400" height="7.400" fill="#d8d8d8" stroke="#555" stroke-width=".6"/><path d="M1.500 6.500C1.500 3 4 2 6.500 2" fill="none" stroke="#22c" stroke-width="1"/><path d="M1.200 6.500h5.500" stroke="#114" stroke-width=".6"/></svg>
<div class="t" style="left:897.5px;top:188.1px;font-size:6.3px;color:#333;transform:translateX(-100%);">24.1cm<span style="font-size:4.600px;position:relative;top:-2.300px">2</span> (15.07o/oo)</div>
<div class="t" style="left:492.5px;top:198.8px;font-size:6.3px;color:#333;transform:translateX(-100%);">2</div>
<svg style="left:498.500px;top:198.10000000000002px" width="8" height="7" viewBox="0 0 8 7"><path d="M.6 .6h2.800v3h4v2.800H.6z" fill="#d8f0dc" stroke="#3aa85a" stroke-width=".8"/><path d="M1.500 5h1M4 5h1" stroke="#3aa85a" stroke-width=".6"/></svg>
<div class="t" style="left:511.5px;top:198.8px;font-size:6.3px;color:#333;">RS1</div>
<div class="t" style="left:572px;top:199.50000000000003px;font-size:6.3px;color:#333;transform:translateX(-50%);">B500C</div>
<div class="t" style="left:603px;top:199.50000000000003px;font-size:6.3px;color:#333;transform:translateX(-50%);">B500C</div>
<div class="t" style="left:656.3px;top:198.8px;font-size:6.3px;color:#333;transform:translateX(-100%);">2.50</div>
<div class="t" style="left:673px;top:199.50000000000003px;font-size:6.3px;color:#333;transform:translateX(-50%);">Φ08</div>
<div class="t" style="left:704px;top:199.50000000000003px;font-size:6.3px;color:#333;transform:translateX(-50%);">Φ20</div>
<div class="t" style="left:757.2px;top:198.8px;font-size:6.3px;color:#333;transform:translateX(-100%);">40.0</div>
<svg style="left:760.0px;top:197.60000000000002px" width="8.500" height="8.300" viewBox="0 0 8 8"><rect x=".3" y=".3" width="7.400" height="7.400" fill="#d8d8d8" stroke="#555" stroke-width=".6"/><path d="M4.600 1.200L3.400 6.800" stroke="#d22" stroke-width="1.100"/></svg>
<svg style="left:769.6px;top:197.60000000000002px" width="8.500" height="8.300" viewBox="0 0 8 8"><rect x=".3" y=".3" width="7.400" height="7.400" fill="#d8d8d8" stroke="#555" stroke-width=".6"/><path d="M1.200 5.500L4 1.800l2.800 3.700z" fill="#7a7a20"/><path d="M1 5.500h6" stroke="#d22" stroke-width=".9"/></svg>
<svg style="left:779.2px;top:197.60000000000002px" width="8.500" height="8.300" viewBox="0 0 8 8"><rect x=".3" y=".3" width="7.400" height="7.400" fill="#d8d8d8" stroke="#555" stroke-width=".6"/><path d="M2.800 1.500v4M5.300 1.500v5" stroke="#114" stroke-width="1"/><circle cx="2.500" cy="6" r="1" fill="#d22"/></svg>
<svg style="left:788.8px;top:197.60000000000002px" width="8.500" height="8.300" viewBox="0 0 8 8"><rect x=".3" y=".3" width="7.400" height="7.400" fill="#d8d8d8" stroke="#555" stroke-width=".6"/><path d="M1.500 6.500C1.500 3 4 2 6.500 2" fill="none" stroke="#22c" stroke-width="1"/><path d="M1.200 6.500h5.500" stroke="#114" stroke-width=".6"/></svg>
<div class="t" style="left:897.5px;top:198.8px;font-size:6.3px;color:#333;transform:translateX(-100%);">16.1cm<span style="font-size:4.600px;position:relative;top:-2.300px">2</span> (10.05o/oo)</div>
<div class="t" style="left:478px;top:247.8px;font-size:5.7px;color:#444;">Διαμόρφωση Επιλεγμένης Διάταξης Όπλισης με Ράβδους &amp; Συνδετήρες:</div>
<div class="t" style="left:762px;top:247.8px;font-size:5.7px;color:#444;">Ελάχιστα - Μέγιστα κατά:</div>
<svg style="left:836.3px;top:247.3px" width="6" height="6" viewBox="0 0 10 10"><circle cx="5" cy="5" r="4.300" fill="#fff" stroke="#adadad" stroke-width="1"/></svg>
<div class="t" style="left:844px;top:248px;font-size:5.4px;color:#444;">ΕΑΚ - ΕΚΩΣ</div>
<svg style="left:882.5px;top:247.3px" width="6" height="6" viewBox="0 0 10 10"><circle cx="5" cy="5" r="4.300" fill="#fff" stroke="#adadad" stroke-width="1"/><circle cx="5" cy="5" r="2.300" fill="#333"/></svg>
<div class="t" style="left:890.3px;top:248px;font-size:5.4px;color:#444;">ΕΚ2 - ΕΚ8</div>
<div class="b" style="left:478.4px;top:258.5px;width:441.20000000000005px;height:281.5px;background:#fff;border-left:1.300px solid #777;border-top:1.300px solid #777;border-right:.7px solid #999;border-bottom:.6px solid #ddd"></div>
<svg style="left:0;top:0" width="1024" height="605" viewBox="0 0 1024 605"><path d="M632.3 307V491.500" stroke="#cfcfcf" stroke-width=".6"/><path d="M658.9 307V491.500" stroke="#cfcfcf" stroke-width=".6"/><path d="M685.5 307V491.500" stroke="#cfcfcf" stroke-width=".6"/><path d="M712.1 307V491.500" stroke="#cfcfcf" stroke-width=".6"/><path d="M738.8 307V491.500" stroke="#cfcfcf" stroke-width=".6"/><path d="M765.4 307V491.500" stroke="#cfcfcf" stroke-width=".6"/><path d="M605.700 333.6H792" stroke="#cfcfcf" stroke-width=".6"/><path d="M605.700 360.1H792" stroke="#cfcfcf" stroke-width=".6"/><path d="M605.700 386.7H792" stroke="#cfcfcf" stroke-width=".6"/><path d="M605.700 413.3H792" stroke="#cfcfcf" stroke-width=".6"/><path d="M605.700 439.9H792" stroke="#cfcfcf" stroke-width=".6"/><path d="M605.700 466.4H792" stroke="#cfcfcf" stroke-width=".6"/><rect x="587.800" y="288.700" width="222.900" height="222.800" fill="none" stroke="#f2c744" stroke-width=".8"/><path d="M699 268V533" stroke="#49a84c" stroke-width=".7" stroke-dasharray="5 2 1 2"/><path d="M571 400H828" stroke="#49a84c" stroke-width=".7" stroke-dasharray="5 2 1 2"/><path d="M699 400H767M699 400V466" stroke="#f28a8a" stroke-width=".7"/><rect x="600.9" y="302.2" width="195.9" height="194.3" rx="9.5" ry="9.5" fill="none" stroke="#f03030" stroke-width=".75"/><rect x="605.6999999999999" y="307.0" width="186.3" height="184.7" rx="4.7" ry="4.7" fill="none" stroke="#f03030" stroke-width=".75"/><rect x="663.3" y="302.2" width="71.1" height="194.3" rx="9.5" ry="9.5" fill="none" stroke="#f03030" stroke-width=".75"/><rect x="668.0999999999999" y="307.0" width="61.5" height="184.7" rx="4.7" ry="4.7" fill="none" stroke="#f03030" stroke-width=".75"/><rect x="600.9" y="363.8" width="195.9" height="72.0" rx="9.5" ry="9.5" fill="none" stroke="#f03030" stroke-width=".75"/><rect x="605.6999999999999" y="368.6" width="186.3" height="62.4" rx="4.7" ry="4.7" fill="none" stroke="#f03030" stroke-width=".75"/><path d="M674.8 308.5 L707.3 341.1 L710.7 337.7 L678.2 305.1" fill="#fff" stroke="#f03030" stroke-width=".75"/><path d="M665.8 317.5 L695.5 347.2 L698.9 343.8 L669.2 314.1" fill="#fff" stroke="#f03030" stroke-width=".75"/><path d="M784.5 308.5 L752.0 341.1 L748.6 337.7 L781.1 305.1" fill="#fff" stroke="#f03030" stroke-width=".75"/><path d="M793.5 317.5 L763.8 347.2 L760.4 343.8 L790.1 314.1" fill="#fff" stroke="#f03030" stroke-width=".75"/><path d="M613.6 370.3 L646.1 402.9 L649.5 399.5 L617.0 366.9" fill="#fff" stroke="#f03030" stroke-width=".75"/><path d="M604.6 379.3 L634.3 409.0 L637.7 405.6 L608.0 375.9" fill="#fff" stroke="#f03030" stroke-width=".75"/><circle cx="610.8" cy="311.3" r="4.300" fill="#6a1518"/><circle cx="610.8" cy="488.3" r="4.300" fill="#6a1518"/><circle cx="672" cy="311.3" r="4.300" fill="#6a1518"/><circle cx="672" cy="488.3" r="4.300" fill="#6a1518"/><circle cx="725.4" cy="311.3" r="4.300" fill="#6a1518"/><circle cx="725.4" cy="488.3" r="4.300" fill="#6a1518"/><circle cx="787.3" cy="311.3" r="4.300" fill="#6a1518"/><circle cx="787.3" cy="488.3" r="4.300" fill="#6a1518"/><circle cx="610.8" cy="373.1" r="4.300" fill="#6a1518"/><circle cx="610.8" cy="426.2" r="4.300" fill="#6a1518"/><circle cx="787.3" cy="373.1" r="4.300" fill="#6a1518"/><circle cx="787.3" cy="426.2" r="4.300" fill="#6a1518"/><rect x="696" y="285.7" width="6" height="6" fill="#0a7d0a"/><rect x="584.8" y="397" width="6" height="6" fill="#0a7d0a"/><rect x="807.7" y="397" width="6" height="6" fill="#0a7d0a"/><rect x="696" y="508.5" width="6" height="6" fill="#0a7d0a"/><circle cx="494" cy="400" r="5.200" fill="#6a1518"/><text x="506" y="402.3" font-size="6.6" fill="#333" text-anchor="start" letter-spacing="0.74" font-family="Liberation Mono,DejaVu Sans Mono,monospace" >B500C</text><text x="687.6" y="266.3" font-size="6.6" fill="#111" text-anchor="start" letter-spacing="0.67" font-family="Liberation Mono,DejaVu Sans Mono,monospace" >12Φ16</text><text x="703" y="273.5" font-size="7" fill="#3a9a45" text-anchor="start" letter-spacing="0.67" font-family="Liberation Mono,DejaVu Sans Mono,monospace" >y</text><text x="703" y="529.5" font-size="7" fill="#3a9a45" text-anchor="start" letter-spacing="0.67" font-family="Liberation Mono,DejaVu Sans Mono,monospace" >y</text><text x="562.5" y="406.5" font-size="7" fill="#3a9a45" text-anchor="start" letter-spacing="0.67" font-family="Liberation Mono,DejaVu Sans Mono,monospace" >x</text><text x="830" y="406.5" font-size="7" fill="#3a9a45" text-anchor="start" letter-spacing="0.67" font-family="Liberation Mono,DejaVu Sans Mono,monospace" >x</text><text x="766.5" y="407.6" font-size="7.6" fill="#f03030" text-anchor="start" letter-spacing="0.67" font-family="Liberation Mono,DejaVu Sans Mono,monospace" >2</text><text x="0" y="0" font-size="7.600" fill="#f03030" font-family="Liberation Mono,DejaVu Sans Mono,monospace" transform="translate(701 466.800) rotate(90)">3</text><text x="727" y="528.4" font-size="6.6" fill="#3a9a45" text-anchor="start" letter-spacing="0.67" font-family="Liberation Mono,DejaVu Sans Mono,monospace" >Ac=1600 cm²</text><text x="480.7" y="538.4" font-size="6.6" fill="#3a9a45" text-anchor="start" letter-spacing="0.67" font-family="Liberation Mono,DejaVu Sans Mono,monospace" >ρmin=1.0% ρmax=4.0% ρ=1.5%</text><text x="583" y="538.4" font-size="6.6" fill="#3a9a45" text-anchor="start" letter-spacing="0.67" font-family="Liberation Mono,DejaVu Sans Mono,monospace" >Asmin=16.0cm²,Asmax = 64.0cm² As = 24.1cm²</text></svg>
<div class="b" style="left:924px;top:146.5px;width:95px;height:159.0px;border:.7px solid #e0e0e0;border-radius:1.500px"></div>
<div class="t" style="left:926.5px;top:144.1px;font-size:5.7px;color:#333;background:#f0f0f0;padding:0 1px;">Τοποθέτηση</div>
<div class="b" style="left:928.5px;top:153.3px;width:85.0px;height:13.199999999999989px;background:#fdfdfd;border:.7px solid #e2e2e2;"></div>
<div class="t" style="left:966.0px;top:157.6px;font-size:5.7px;color:#333;transform:translateX(-50%);">Νέα Διάταξη Όπλισης</div>
<svg style="left:1005.5px;top:159.1px" width="4.400" height="3" viewBox="0 0 4 3"><path d="M.2 .4h3.600L2 2.600z" fill="#555"/></svg>
<div class="b" style="left:928.5px;top:171.5px;width:85px;height:0.6px;background:#e0e0e0;"></div>
<div class="t" style="left:929.5px;top:173.6px;font-size:5.7px;color:#333;">Ράβδοι</div>
<div class="b" style="left:928.5px;top:182px;width:50.700000000000045px;height:14px;background:#fdfdfd;border:.8px solid #dadada;"></div>
<div class="t" style="left:953.85px;top:186.7px;font-size:5.7px;color:#333;transform:translateX(-50%);">Προσθήκη</div>
<div class="b" style="left:983.3px;top:183px;width:29.90000000000009px;height:10.5px;background:#fdfdfd;border:.7px solid #e2e2e2;"></div>
<div class="t" style="left:985.3px;top:185.95px;font-size:5.7px;color:#333;">B500C</div>
<svg style="left:1006.7px;top:187.45px" width="2.600" height="1.800" viewBox="0 0 4 3"><path d="M.2 .4h3.600L2 2.600z" fill="#666"/></svg>
<div class="b" style="left:928.5px;top:197.2px;width:50.700000000000045px;height:13.800000000000011px;background:#fdfdfd;border:.8px solid #dadada;"></div>
<div class="t" style="left:953.85px;top:201.79999999999998px;font-size:5.7px;color:#333;transform:translateX(-50%);">Αλλαγή</div>
<div class="b" style="left:983.3px;top:198.4px;width:29.90000000000009px;height:9.900000000000006px;background:#fdfdfd;border:.7px solid #e2e2e2;"></div>
<div class="t" style="left:985.3px;top:201.05px;font-size:5.7px;color:#333;">Φ20</div>
<svg style="left:1006.7px;top:202.55px" width="2.600" height="1.800" viewBox="0 0 4 3"><path d="M.2 .4h3.600L2 2.600z" fill="#666"/></svg>
<div class="b" style="left:928.5px;top:229px;width:85px;height:0.6px;background:#e0e0e0;"></div>
<div class="t" style="left:929.5px;top:233.5px;font-size:5.7px;color:#333;">Συνδετήρας ή Σχάρα</div>
<div class="b" style="left:928.5px;top:242.4px;width:50.700000000000045px;height:24.299999999999983px;background:#fdfdfd;border:.8px solid #dadada;"></div>
<div class="t" style="left:953.85px;top:252.25px;font-size:5.7px;color:#333;transform:translateX(-50%);">Συνδετήρας</div>
<div class="b" style="left:983.3px;top:243.5px;width:29.90000000000009px;height:10.5px;background:#fdfdfd;border:.7px solid #e2e2e2;"></div>
<div class="t" style="left:985.3px;top:246.45px;font-size:5.7px;color:#333;">B500C</div>
<svg style="left:1006.7px;top:247.95px" width="2.600" height="1.800" viewBox="0 0 4 3"><path d="M.2 .4h3.600L2 2.600z" fill="#666"/></svg>
<div class="b" style="left:983.3px;top:256.7px;width:29.90000000000009px;height:10.300000000000011px;background:#fdfdfd;border:.7px solid #e2e2e2;"></div>
<div class="t" style="left:985.3px;top:259.55px;font-size:5.7px;color:#333;">Φ08</div>
<svg style="left:1006.7px;top:261.05px" width="2.600" height="1.800" viewBox="0 0 4 3"><path d="M.2 .4h3.600L2 2.600z" fill="#666"/></svg>
<div class="b" style="left:928.5px;top:268.2px;width:50.700000000000045px;height:13.300000000000011px;background:#fdfdfd;border:.8px solid #dadada;"></div>
<div class="t" style="left:953.85px;top:272.55px;font-size:5.7px;color:#333;transform:translateX(-50%);">Αλλαγή</div>
<div class="b" style="left:928.5px;top:285.3px;width:85px;height:0.6px;background:#e0e0e0;"></div>
<div class="b" style="left:928.5px;top:289px;width:50.700000000000045px;height:13.5px;background:#fdfdfd;border:.8px solid #dadada;"></div>
<div class="t" style="left:953.85px;top:293.45px;font-size:5.7px;color:#333;transform:translateX(-50%);">Διαγραφή</div>
<div class="b" style="left:983.3px;top:289px;width:30.200000000000045px;height:13.5px;background:#fdfdfd;border:.8px solid #dadada;"></div>
<div class="t" style="left:998.4px;top:293.45px;font-size:5.7px;color:#333;transform:translateX(-50%);">Άκυρο</div>
<div class="b" style="left:924px;top:316px;width:95.5px;height:47.80000000000001px;border:.7px solid #e0e0e0;border-radius:1.500px"></div>
<div class="t" style="left:926.5px;top:313.6px;font-size:5.7px;color:#333;background:#f0f0f0;padding:0 1px;">Διατμητικός Οπλισμός</div>
<div class="t" style="left:928.5px;top:326.2px;font-size:5.7px;color:#333;">Κρίσιμη ανά:</div>
<div class="b" style="left:976.3px;top:324.3px;width:27.1px;height:8.7px;background:#fdfdfd;border:.6px solid #e6e6e6"></div>
<div class="t" style="left:1001.5px;top:326.2px;font-size:5.7px;color:#333;transform:translateX(-100%);">10.0</div>
<div class="t" style="left:1007px;top:326.2px;font-size:5.7px;color:#333;">cm</div>
<div class="t" style="left:928.5px;top:338px;font-size:5.7px;color:#333;">Μη Κρίσιμη ανά:</div>
<div class="b" style="left:976.3px;top:336px;width:27.1px;height:9px;background:#fdfdfd;border:.6px solid #e6e6e6"></div>
<div class="t" style="left:1001.5px;top:338px;font-size:5.7px;color:#333;transform:translateX(-100%);">20.0</div>
<div class="t" style="left:1007px;top:338px;font-size:5.7px;color:#333;">cm</div>
<div class="b" style="left:924px;top:370.5px;width:95.5px;height:155.20000000000005px;border:.7px solid #e0e0e0;border-radius:1.500px"></div>
<div class="t" style="left:926.5px;top:368.1px;font-size:5.7px;color:#333;background:#f0f0f0;padding:0 1px;">Απεικόνιση</div>
<svg style="left:929.7px;top:380.1px" width="5.8" height="5.8" viewBox="0 0 10 10"><rect x=".6" y=".6" width="8.800" height="8.800" fill="#fff" stroke="#8a8a8a" stroke-width="1.100"/><path d="M2.200 5.200l2 2.100L7.900 2.800" fill="none" stroke="#333" stroke-width="1.100"/></svg>
<div class="t" style="left:937.0px;top:380.5px;font-size:5.7px;color:#333;">Κάναβος Τοποθέτησης</div>
<svg style="left:940.8px;top:390.1px" width="5.8" height="5.8" viewBox="0 0 10 10"><rect x=".6" y=".6" width="8.800" height="8.800" fill="#fff" stroke="#8a8a8a" stroke-width="1.100"/><path d="M2.200 5.200l2 2.100L7.900 2.800" fill="none" stroke="#333" stroke-width="1.100"/></svg>
<div class="t" style="left:948.0999999999999px;top:390.5px;font-size:5.7px;color:#333;">Αξόνες Συμμετρίας</div>
<svg style="left:940.8px;top:400.1px" width="5.8" height="5.8" viewBox="0 0 10 10"><rect x=".6" y=".6" width="8.800" height="8.800" fill="#fff" stroke="#c0c0c0" stroke-width="1.100"/><path d="M2.200 5.200l2 2.100L7.900 2.800" fill="none" stroke="#b0b0b0" stroke-width="1.100"/></svg>
<div class="t" style="left:948.0999999999999px;top:400.5px;font-size:5.7px;color:#b4b4b4;">Πρόσθετο Τετραγωνίδιο</div>
<svg style="left:929.7px;top:421.8px" width="5.8" height="5.8" viewBox="0 0 10 10"><rect x=".6" y=".6" width="8.800" height="8.800" fill="#fff" stroke="#8a8a8a" stroke-width="1.100"/><path d="M2.200 5.200l2 2.100L7.900 2.800" fill="none" stroke="#333" stroke-width="1.100"/></svg>
<div class="t" style="left:937.0px;top:422.2px;font-size:5.7px;color:#333;">Διαμήκεις Ράβδοι</div>
<svg style="left:929.7px;top:432.6px" width="5.8" height="5.8" viewBox="0 0 10 10"><rect x=".6" y=".6" width="8.800" height="8.800" fill="#fff" stroke="#8a8a8a" stroke-width="1.100"/><path d="M2.200 5.200l2 2.100L7.900 2.800" fill="none" stroke="#333" stroke-width="1.100"/></svg>
<div class="t" style="left:937.0px;top:433.0px;font-size:5.7px;color:#333;">Συνδετήρες</div>
<svg style="left:929.7px;top:443.3px" width="5.8" height="5.8" viewBox="0 0 10 10"><rect x=".6" y=".6" width="8.800" height="8.800" fill="#fff" stroke="#8a8a8a" stroke-width="1.100"/></svg>
<div class="t" style="left:937.0px;top:443.7px;font-size:5.7px;color:#333;">Περίσφιγξη</div>
<svg style="left:929.7px;top:453.1px" width="5.8" height="5.8" viewBox="0 0 10 10"><rect x=".6" y=".6" width="8.800" height="8.800" fill="#fff" stroke="#8a8a8a" stroke-width="1.100"/></svg>
<div class="t" style="left:937.0px;top:453.5px;font-size:5.7px;color:#333;">Λωρίδες Διάτμησης:</div>
<div class="b" style="left:949.4px;top:464.5px;width:64.1px;height:42.1px;background:#fdfdfd;border:.6px solid #e6e6e6"></div>
<svg style="left:953.5px;top:467.2px" width="5.6" height="5.6" viewBox="0 0 10 10"><rect x=".6" y=".6" width="8.800" height="8.800" fill="#fff" stroke="#aaa" stroke-width="1.100"/><path d="M2.200 5.200l2 2.100L7.900 2.800" fill="none" stroke="#777" stroke-width="1.100"/></svg>
<div class="t" style="left:961.8px;top:467.6px;font-size:5.7px;color:#333;">Λωρ-1 (φ=0°)</div>
<svg style="left:953.5px;top:475.9px" width="5.6" height="5.6" viewBox="0 0 10 10"><rect x=".6" y=".6" width="8.800" height="8.800" fill="#fff" stroke="#aaa" stroke-width="1.100"/><path d="M2.200 5.200l2 2.100L7.900 2.800" fill="none" stroke="#777" stroke-width="1.100"/></svg>
<div class="t" style="left:961.8px;top:476.3px;font-size:5.7px;color:#333;">Λωρ-2 (φ=90°)</div>
<div class="b" style="left:927.5px;top:464.5px;width:19.799999999999955px;height:12.5px;background:#fdfdfd;border:.8px solid #d8d8d8;"><svg style="left:4.499999999999977px;top:0.8499999999999996px" width="10" height="10" viewBox="0 0 10 10"><rect x="1" y="2.500" width="8" height="4" fill="#e8eef8" stroke="#99a" stroke-width=".4"/><path d="M5 1v8M3 7.500h4" stroke="#22c" stroke-width=".7"/><circle cx="5" cy="4.500" r="1" fill="#22c"/></svg></div>
<div class="b" style="left:927.5px;top:479.7px;width:19.799999999999955px;height:12.300000000000011px;background:#fdfdfd;border:.8px solid #d8d8d8;"><svg style="left:4.499999999999977px;top:0.7500000000000053px" width="10" height="10" viewBox="0 0 10 10"><path d="M1 8.500h8" stroke="#222" stroke-width=".7"/><path d="M2 1.500l4.500 5.500M2.500 7L8 1.500" stroke="#22c" stroke-width=".8"/></svg></div>
<div class="b" style="left:927.5px;top:494px;width:19.799999999999955px;height:12.600000000000023px;background:#fdfdfd;border:.8px solid #d8d8d8;"><svg style="left:4.499999999999977px;top:0.900000000000011px" width="10" height="10" viewBox="0 0 10 10"><rect x="1.500" y="1.200" width="7" height="7.500" fill="#e8eef8" stroke="#222" stroke-width=".8"/><path d="M5 1.200v7.500M1.500 5h7" stroke="#22c" stroke-width=".7" stroke-dasharray="1 .6"/></svg></div>
<div class="b" style="left:927.5px;top:509px;width:19.799999999999955px;height:12.600000000000023px;background:#fdfdfd;border:.8px solid #d8d8d8;"><svg style="left:4.499999999999977px;top:0.900000000000011px" width="10" height="10" viewBox="0 0 10 10"><circle cx="4.300" cy="4.300" r="3" fill="#fff" stroke="#222" stroke-width=".8"/><path d="M2.800 4.300h3" stroke="#c22" stroke-width=".8"/><path d="M6.500 6.500L9 9" stroke="#222" stroke-width="1.100"/></svg></div>
<div class="b" style="left:949.4px;top:509px;width:20.0px;height:12.600000000000023px;background:#fdfdfd;border:.8px solid #d8d8d8;"><svg style="left:4.6px;top:0.900000000000011px" width="10" height="10" viewBox="0 0 10 10"><circle cx="4.300" cy="4.300" r="3" fill="#fff" stroke="#222" stroke-width=".8"/><path d="M4.300 1v6.600M1 4.300h6.600" stroke="#c22" stroke-width=".7"/><path d="M6.500 6.500L9 9" stroke="#222" stroke-width="1.100"/></svg></div>
<div class="b" style="left:971.6px;top:509px;width:19.699999999999932px;height:12.600000000000023px;background:#fdfdfd;border:.8px solid #d8d8d8;"><svg style="left:4.4499999999999655px;top:0.900000000000011px" width="10" height="10" viewBox="0 0 10 10"><path d="M2 5l1.500-3h4l1 3z" fill="#e8eef8" stroke="#89a" stroke-width=".5"/><rect x="1" y="5" width="8" height="3" fill="#b8c4d8" stroke="#678" stroke-width=".5"/><path d="M3 3.200h3.500" stroke="#678" stroke-width=".5"/></svg></div>
<div class="b" style="left:993.5px;top:509px;width:20.0px;height:12.600000000000023px;background:#fdfdfd;border:.8px solid #d8d8d8;"><svg style="left:4.6px;top:0.900000000000011px" width="10" height="10" viewBox="0 0 10 10"><rect x="1.500" y="1.500" width="4.500" height="5" fill="#fff" stroke="#225" stroke-width=".8"/><path d="M4 4h3l1.500 1.500v3.500H4z" fill="#dfe6f3" stroke="#225" stroke-width=".8"/></svg></div>
<div class="b" style="left:923.2px;top:529.6px;width:47.799999999999955px;height:12.199999999999932px;background:#fdfdfd;border:.8px solid #3a7ad8;"></div>
<div class="t" style="left:947.1px;top:533.4000000000001px;font-size:5.7px;color:#333;transform:translateX(-50%);">OK</div>
<div class="b" style="left:976.3px;top:529.6px;width:43.200000000000045px;height:12.199999999999932px;background:#fdfdfd;border:.8px solid #dadada;"></div>
<div class="t" style="left:997.9px;top:533.4000000000001px;font-size:5.7px;color:#333;transform:translateX(-50%);">Cancel</div>
<div class="b" style="left:0px;top:592px;width:1024px;height:13px;background:#f0f0f0;"></div>
<div class="t" style="left:5px;top:596.2px;font-size:6.4px;color:#555;">www.tol.com.gr</div>
<svg style="left:244px;top:594.500px" width="22" height="8" viewBox="0 0 22 8"><rect x=".4" y=".4" width="6.500" height="6.500" fill="#fff" stroke="#4a6ab8" stroke-width=".7"/><path d="M.4 2.500h6.500M.4 4.700h6.500M2.600 .4v6.500M4.800 .4v6.500" stroke="#4a6ab8" stroke-width=".45"/><path d="M8.500 3l1.300 1.300L11.100 3" fill="none" stroke="#555" stroke-width=".6"/><rect x="14" y=".8" width="7.500" height="6" fill="#dfe8f8" stroke="#6a8ac8" stroke-width=".5"/><path d="M14 2.800h7.500M14 4.800h7.500" stroke="#4a6ab8" stroke-width=".7"/></svg>
<div class="t" style="left:277px;top:596.2px;font-size:6.4px;color:#444;letter-spacing:-.13px">ΕΥΡΩΚΩΔΙΚΕΣ | Ιδιομορφική | Κ.Π.Μ. | q=3.50 | Σχεδιασμού | Τύπος 1</div>
<div class="t" style="left:522px;top:596.2px;font-size:6.4px;color:#444;">Νέο Έργο</div>
<svg style="left:738px;top:594.500px" width="7" height="8" viewBox="0 0 7 8"><path d="M1.800 3.500V2.300a1.700 1.700 0 0 1 3.400 0V3.500" fill="none" stroke="#8a6a1a" stroke-width=".8"/><rect x=".8" y="3.500" width="5.400" height="4" rx=".5" fill="#e8b030" stroke="#a87a10" stroke-width=".4"/></svg>
<div class="t" style="left:846.3px;top:596.5px;font-size:6.7px;color:#444;">κάναβος</div>
<svg style="left:873.500px;top:599.500px" width="4" height="3" viewBox="0 0 4 3"><path d="M.4 .5l1.600 1.600L3.600 .5" fill="none" stroke="#555" stroke-width=".7"/></svg>
<div class="b" style="left:879px;top:594.2px;width:17px;height:10.8px;background:#ccd5e6;border:1px solid #7f9fd4"></div>
<div class="t" style="left:887.5px;top:596.5px;font-size:6.7px;color:#333;transform:translateX(-50%);font-style:italic">έλξη</div>
<div class="b" style="left:898.4px;top:594.2px;width:11.5px;height:10.8px;background:#ccd5e6;border:1px solid #7f9fd4"></div>
<div class="t" style="left:904.2px;top:596.5px;font-size:6.7px;color:#333;transform:translateX(-50%);font-style:italic">dxf</div>
<div class="t" style="left:911.5px;top:596.5px;font-size:6.7px;color:#444;font-style:italic">έλξη</div>
<div class="t" style="left:931px;top:596.5px;font-size:6.7px;color:#444;">κάθετα</div>
<div class="t" style="left:958.5px;top:595.3px;font-size:8.5px;color:#777;">−</div>
<div class="b" style="left:967.5px;top:599.6px;width:47px;height:1px;background:#bdbdbd;"></div>
<div class="b" style="left:990px;top:595px;width:2.4px;height:8.5px;background:#5a5a5a;"></div>
<div class="t" style="left:1019px;top:595.3px;font-size:8.5px;color:#777;">+</div>
</div></body></html>
